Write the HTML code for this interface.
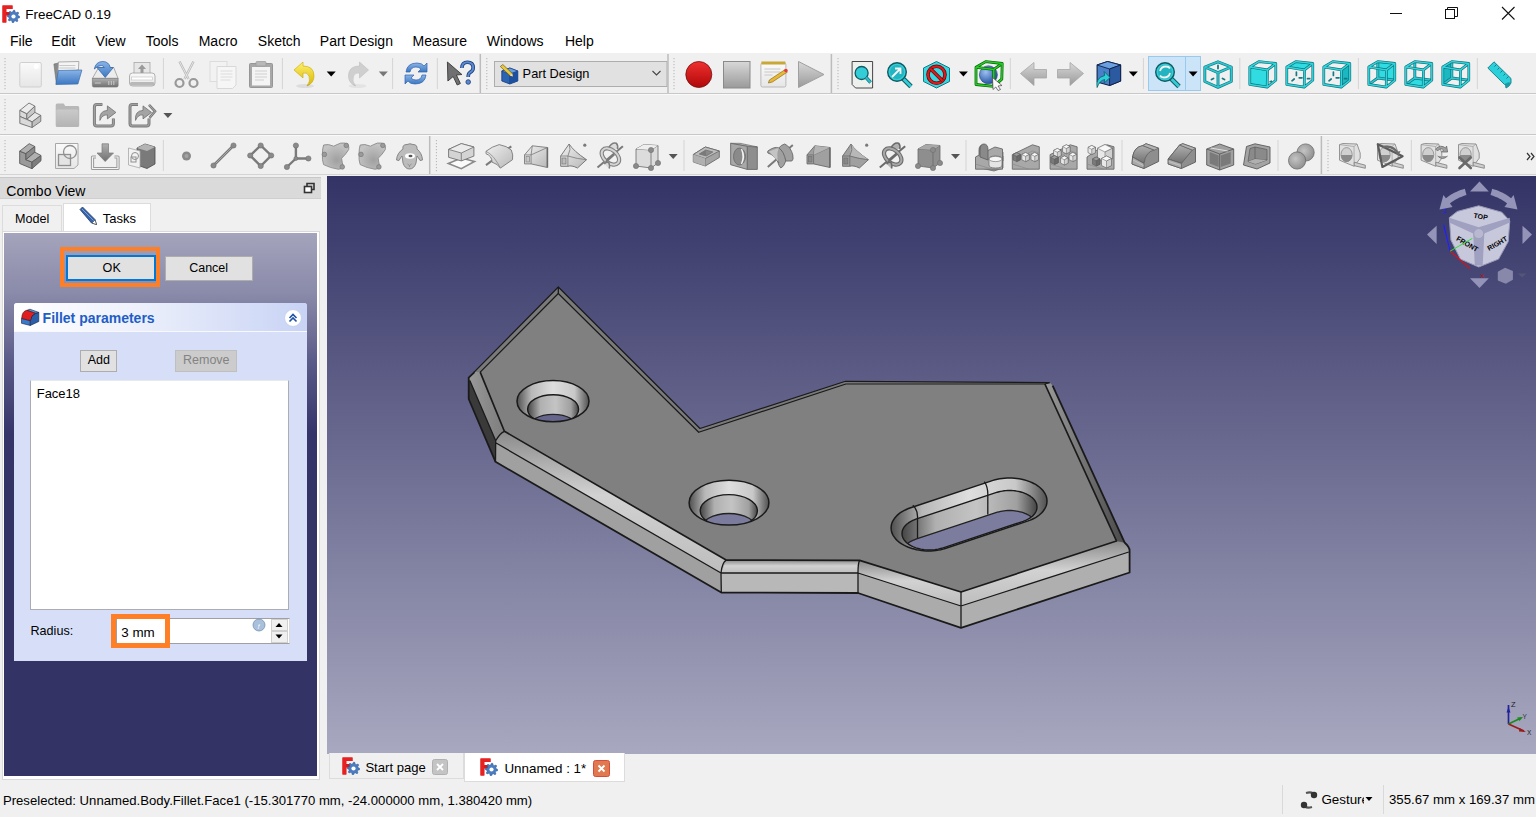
<!DOCTYPE html>
<html><head><meta charset="utf-8"><style>
html,body{margin:0;padding:0;width:1536px;height:817px;overflow:hidden;background:#f0f0f0;font-family:"Liberation Sans", sans-serif;position:relative}
</style></head><body>
<div style="position:absolute;left:0px;top:0px;width:1536px;height:53px;background:#fff"></div><div style="position:absolute;left:0px;top:53px;width:1536px;height:124px;background:#f0f0f0"></div><div style="position:absolute;left:0px;top:93px;width:1536px;height:1px;background:#c8c8c8"></div><div style="position:absolute;left:0px;top:94px;width:1536px;height:1px;background:#fafafa"></div><div style="position:absolute;left:0px;top:133.5px;width:1536px;height:1px;background:#c8c8c8"></div><div style="position:absolute;left:0px;top:134.5px;width:1536px;height:1px;background:#fafafa"></div><div style="position:absolute;left:0px;top:174px;width:1536px;height:1px;background:#d4d4d4"></div><div style="position:absolute;left:25.3px;top:7.66px;font-size:13.4px;line-height:13.4px;color:#000;font-weight:normal;white-space:nowrap;">FreeCAD 0.19</div><svg style="position:absolute;left:1384px;top:0px;" width="140" height="28" viewBox="0 0 140 28">
      <line x1="6" y1="13.5" x2="18" y2="13.5" stroke="#111" stroke-width="1"/>
      <rect x="61.5" y="9.5" width="9" height="9" fill="none" stroke="#111"/>
      <path d="M63.5 9.5 V7.5 H73.5 V16.5 H70.5" fill="none" stroke="#111"/>
      <path d="M118 7 L130.5 19.5 M130.5 7 L118 19.5" stroke="#111" stroke-width="1.1"/>
    </svg><div style="position:absolute;left:10px;top:34.15px;font-size:14px;line-height:14px;color:#000;font-weight:normal;white-space:nowrap;">File</div><div style="position:absolute;left:51.3px;top:34.15px;font-size:14px;line-height:14px;color:#000;font-weight:normal;white-space:nowrap;">Edit</div><div style="position:absolute;left:95.6px;top:34.15px;font-size:14px;line-height:14px;color:#000;font-weight:normal;white-space:nowrap;">View</div><div style="position:absolute;left:145.8px;top:34.15px;font-size:14px;line-height:14px;color:#000;font-weight:normal;white-space:nowrap;">Tools</div><div style="position:absolute;left:198.7px;top:34.15px;font-size:14px;line-height:14px;color:#000;font-weight:normal;white-space:nowrap;">Macro</div><div style="position:absolute;left:257.8px;top:34.15px;font-size:14px;line-height:14px;color:#000;font-weight:normal;white-space:nowrap;">Sketch</div><div style="position:absolute;left:319.8px;top:34.15px;font-size:14px;line-height:14px;color:#000;font-weight:normal;white-space:nowrap;">Part Design</div><div style="position:absolute;left:412.6px;top:34.15px;font-size:14px;line-height:14px;color:#000;font-weight:normal;white-space:nowrap;">Measure</div><div style="position:absolute;left:486.8px;top:34.15px;font-size:14px;line-height:14px;color:#000;font-weight:normal;white-space:nowrap;">Windows</div><div style="position:absolute;left:564.9px;top:34.15px;font-size:14px;line-height:14px;color:#000;font-weight:normal;white-space:nowrap;">Help</div><div style="position:absolute;left:0px;top:177px;width:321px;height:22px;background:#dadada;border-top:1px solid #c8c8c8;border-bottom:1px solid #cfcfcf;box-sizing:border-box"></div><div style="position:absolute;left:6.3px;top:183.65px;font-size:14px;line-height:14px;color:#000;font-weight:normal;white-space:nowrap;">Combo View</div><svg style="position:absolute;left:303px;top:182px;" width="13" height="13" viewBox="0 0 13 13"><rect x="1.5" y="4.5" width="7" height="6" fill="#fff" stroke="#333" stroke-width="1.6"/><path d="M4 4 V1.5 H11 V7.5 H9" fill="none" stroke="#333" stroke-width="1.6"/></svg><div style="position:absolute;left:2px;top:205px;width:60px;height:27px;background:#f0f0f0;border:1px solid #dcdcdc;border-bottom:none;box-sizing:border-box"></div><div style="position:absolute;left:14.9px;top:212.73px;font-size:12.6px;line-height:12.6px;color:#000;font-weight:normal;white-space:nowrap;">Model</div><div style="position:absolute;left:62.5px;top:203px;width:88px;height:29px;background:#fff;border:1px solid #dcdcdc;border-bottom:none;box-sizing:border-box"></div><div style="position:absolute;left:102.7px;top:212.40px;font-size:13px;line-height:13px;color:#000;font-weight:normal;white-space:nowrap;">Tasks</div><div style="position:absolute;left:2px;top:231px;width:318px;height:549px;background:#fff;border:1px solid #d9d9d9;box-sizing:border-box"></div><div style="position:absolute;left:4px;top:233px;width:313px;height:543px;background:linear-gradient(to bottom, #a4a4bc 0px, #8a8aaa 60px, #5a5a88 130px, #35356a 200px, #333366 260px, #333366 100%)"></div><div style="position:absolute;left:60px;top:247px;width:100px;height:40px;border:4px solid #ff7f27;box-sizing:border-box"></div><div style="position:absolute;left:66px;top:254.5px;width:89.5px;height:26.5px;background:#e1e1e1;border:2px solid #0078d7;box-sizing:border-box"></div><div style="position:absolute;left:102.6px;top:262.33px;font-size:12.6px;line-height:12.6px;color:#000;font-weight:normal;white-space:nowrap;">OK</div><div style="position:absolute;left:164.5px;top:256px;width:88.5px;height:25px;background:#e1e1e1;border:1px solid #adadad;box-sizing:border-box"></div><div style="position:absolute;left:189.2px;top:262.42px;font-size:12.5px;line-height:12.5px;color:#000;font-weight:normal;white-space:nowrap;">Cancel</div><div style="position:absolute;left:13.5px;top:303px;width:293px;height:358px;background:#d6dff7;border-radius:3px 3px 0 0"></div><div style="position:absolute;left:13.5px;top:303px;width:293px;height:29px;background:linear-gradient(to right,#ffffff 0%,#eef1fb 40%,#c8d3f5 100%);border-radius:3px 3px 0 0"></div><div style="position:absolute;left:13.5px;top:331px;width:293px;height:1px;background:#f8f9fe"></div><div style="position:absolute;left:42.6px;top:310.75px;font-size:14px;line-height:14px;color:#215dc6;font-weight:bold;white-space:nowrap;">Fillet parameters</div><div style="position:absolute;left:80px;top:349.5px;width:37px;height:22px;background:#e1e1e1;border:1px solid #adadad;box-sizing:border-box"></div><div style="position:absolute;left:87.7px;top:354.42px;font-size:12.5px;line-height:12.5px;color:#000;font-weight:normal;white-space:nowrap;">Add</div><div style="position:absolute;left:175px;top:349.5px;width:62px;height:22px;background:#cccccc;border:1px solid #bfbfbf;box-sizing:border-box"></div><div style="position:absolute;left:183px;top:354.42px;font-size:12.5px;line-height:12.5px;color:#838383;font-weight:normal;white-space:nowrap;">Remove</div><div style="position:absolute;left:30px;top:380px;width:259px;height:229.5px;background:#fff;border:1px solid #abadb3;border-top-color:#e3e9ef;box-sizing:border-box"></div><div style="position:absolute;left:36.7px;top:387.00px;font-size:13px;line-height:13px;color:#000;font-weight:normal;white-space:nowrap;">Face18</div><div style="position:absolute;left:30.5px;top:625.33px;font-size:12.6px;line-height:12.6px;color:#000;font-weight:normal;white-space:nowrap;">Radius:</div><div style="position:absolute;left:116px;top:618px;width:174px;height:25.5px;background:#fff;border:1px solid #a0a0a0;border-right-color:#dadada;box-sizing:border-box"></div><div style="position:absolute;left:270.5px;top:619px;width:17px;height:11.5px;background:#f0f0f0;border:1px solid #d0d0d0;box-sizing:border-box"></div><div style="position:absolute;left:270.5px;top:631px;width:17px;height:11.5px;background:#f0f0f0;border:1px solid #d0d0d0;box-sizing:border-box"></div><svg style="position:absolute;left:270px;top:618px;" width="18" height="26" viewBox="0 0 18 26"><path d="M5.5 9 L9 5 L12.5 9Z M5.5 16.5 L9 20.5 L12.5 16.5Z" fill="#000"/></svg><div style="position:absolute;left:111px;top:613.5px;width:59px;height:34.5px;border:5px solid #ff7f27;box-sizing:border-box"></div><div style="position:absolute;left:121.3px;top:625.66px;font-size:13.4px;line-height:13.4px;color:#000;font-weight:normal;white-space:nowrap;">3 mm</div><div style="position:absolute;left:327px;top:176px;width:1209px;height:577.5px;background:linear-gradient(to bottom,#333366 0%,#a8a8c0 100%)"></div><div style="position:absolute;left:329px;top:753px;width:135px;height:25.5px;background:#f0f0f0;border:1px solid #dcdcdc;border-top:none;box-sizing:border-box"></div><div style="position:absolute;left:365.4px;top:760.61px;font-size:13.1px;line-height:13.1px;color:#000;font-weight:normal;white-space:nowrap;">Start page</div><div style="position:absolute;left:464px;top:753px;width:161px;height:28.5px;background:#fff;border:1px solid #dcdcdc;border-top:none;box-sizing:border-box"></div><div style="position:absolute;left:504.4px;top:761.76px;font-size:13.4px;line-height:13.4px;color:#000;font-weight:normal;white-space:nowrap;">Unnamed : 1*</div><div style="position:absolute;left:2.9px;top:793.57px;font-size:13.15px;line-height:13.15px;color:#000;font-weight:normal;white-space:nowrap;">Preselected: Unnamed.Body.Fillet.Face1 (-15.301770 mm, -24.000000 mm, 1.380420 mm)</div><div style="position:absolute;left:1282px;top:784.5px;width:1px;height:29px;background:#d9d9d9"></div><div style="position:absolute;left:1383px;top:784.5px;width:1px;height:29px;background:#d9d9d9"></div><div style="position:absolute;left:1321.4px;top:788px;width:42.5px;height:24px;overflow:hidden"><div style="position:absolute;left:0px;top:5.16px;font-size:13.4px;line-height:13.4px;color:#000;font-weight:normal;white-space:nowrap;">Gesture</div></div><svg style="position:absolute;left:1364px;top:795px;" width="10" height="8" viewBox="0 0 10 8"><path d="M1.5 2 L8.5 2 L5 6Z" fill="#000"/></svg><div style="position:absolute;left:1389px;top:793.33px;font-size:13.2px;line-height:13.2px;color:#000;font-weight:normal;white-space:nowrap;">355.67 mm x 169.37 mm</div><svg style="position:absolute;left:0px;top:0px;" width="1536" height="180" viewBox="0 0 1536 180"><defs>
<linearGradient id="gW" x1="0" y1="0" x2="0" y2="1"><stop offset="0" stop-color="#fafafa"/><stop offset="1" stop-color="#e6e6e6"/></linearGradient>
<linearGradient id="gBlue" x1="0" y1="0" x2="0" y2="1"><stop offset="0" stop-color="#8ab4e6"/><stop offset="1" stop-color="#3c78c3"/></linearGradient>
<linearGradient id="gGray" x1="0" y1="0" x2="0" y2="1"><stop offset="0" stop-color="#d8d8d8"/><stop offset="1" stop-color="#9a9a9a"/></linearGradient>
<linearGradient id="gGrayD" x1="0" y1="0" x2="0" y2="1"><stop offset="0" stop-color="#b0b0b0"/><stop offset="1" stop-color="#707070"/></linearGradient>
<linearGradient id="gRed" x1="0" y1="0" x2="0" y2="1"><stop offset="0" stop-color="#f03030"/><stop offset="1" stop-color="#b00808"/></linearGradient>
<linearGradient id="gCy" x1="0" y1="0" x2="0" y2="1"><stop offset="0" stop-color="#45e0e8"/><stop offset="1" stop-color="#1bb8c4"/></linearGradient>
<linearGradient id="gYel" x1="0" y1="0" x2="0" y2="1"><stop offset="0" stop-color="#fff070"/><stop offset="1" stop-color="#d8b800"/></linearGradient>
<radialGradient id="gSph" cx="0.35" cy="0.35" r="0.7"><stop offset="0" stop-color="#9ec0f0"/><stop offset="1" stop-color="#2050a0"/></radialGradient>
<linearGradient id="gFold" x1="0" y1="0" x2="0" y2="1"><stop offset="0" stop-color="#cacaca"/><stop offset="1" stop-color="#b4b4b4"/></linearGradient>
<linearGradient id="gRev" x1="0" y1="0" x2="1" y2="1"><stop offset="0" stop-color="#f0f0f0"/><stop offset="1" stop-color="#b8b8b8"/></linearGradient>
<radialGradient id="gBlob" cx="0.55" cy="0.65" r="0.6"><stop offset="0" stop-color="#a0a0a0"/><stop offset="1" stop-color="#c4c4c4"/></radialGradient>
<radialGradient id="gSphG" cx="0.4" cy="0.4" r="0.7"><stop offset="0" stop-color="#c4c4c4"/><stop offset="1" stop-color="#8a8a8a"/></radialGradient>
</defs><rect x="4.5" y="58.0" width="1" height="1.2" fill="#b4b4b4"/><rect x="4.5" y="61.0" width="1" height="1.2" fill="#b4b4b4"/><rect x="4.5" y="64.0" width="1" height="1.2" fill="#b4b4b4"/><rect x="4.5" y="67.0" width="1" height="1.2" fill="#b4b4b4"/><rect x="4.5" y="70.0" width="1" height="1.2" fill="#b4b4b4"/><rect x="4.5" y="73.0" width="1" height="1.2" fill="#b4b4b4"/><rect x="4.5" y="76.0" width="1" height="1.2" fill="#b4b4b4"/><rect x="4.5" y="79.0" width="1" height="1.2" fill="#b4b4b4"/><rect x="4.5" y="82.0" width="1" height="1.2" fill="#b4b4b4"/><rect x="4.5" y="85.0" width="1" height="1.2" fill="#b4b4b4"/><rect x="4.5" y="88.0" width="1" height="1.2" fill="#b4b4b4"/><g transform="translate(19.3,62) scale(1.0)"><rect x="0.5" y="0.5" width="21.5" height="24.5" rx="1.5" fill="url(#gW)" stroke="#cfcfcf"/><circle cx="17" cy="4.5" r="2.5" fill="#fff"/></g><g transform="translate(53.4,61) scale(1.0)"><path d="M0.5 3 L5 2 L6 22 L3 23Z" fill="#8a8a8a" stroke="#6e6e6e" stroke-width="0.6"/><path d="M5 1 L25.5 0.5 L25 9 L4.5 12Z" fill="#f4f4f4" stroke="#9a9a9a" stroke-width="0.8"/><path d="M6 4.5 H22 M6 7 H22" stroke="#c8c8c8" stroke-width="1.2"/><path d="M5 9.5 L28.5 9 L24.5 23 L2.5 23.5Z" fill="url(#gBlue)" stroke="#3a6eb0" stroke-width="0.7"/></g><g transform="translate(91.8,61) scale(1.0)"><path d="M6.8 6.5 H21.9 L26.3 17.5 H0.6Z" fill="#ececec" stroke="#9a9a9a" stroke-width="0.8"/><path d="M0.6 17.3 H26.3 V24.5 Q26.3 26 24.8 26 H2.1 Q0.6 26 0.6 24.5Z" fill="url(#gGrayD)" stroke="#7a7a7a" stroke-width="0.7"/><path d="M3 22 H9 M17 20 V24 M19.5 20 V24 M22 20 V24" stroke="#d0d0d0" stroke-width="0.9"/><path d="M2.5 8 Q4 0.5 11 0.5 Q17 0.5 18.5 6.5 L21.5 6.5 L13.4 16.5 L5.2 6.5 L12.5 6.5 Q11.5 4.5 9.5 4.5 Q6 4.5 2.5 8Z" fill="url(#gBlue)" stroke="#2a5ea8" stroke-width="0.7"/></g><g transform="translate(129,62) scale(1.0)"><rect x="5" y="0.5" width="16" height="12" fill="#e6e6e6" stroke="#a8a8a8" stroke-width="0.8"/><path d="M13 2.5 L17 7 L14.5 7 L14.5 11 L11.5 11 L11.5 7 L9 7Z" fill="#9a9a9a"/><rect x="0.5" y="11" width="25.5" height="13" rx="3" fill="url(#gW)" stroke="#a0a0a0" stroke-width="0.8"/><rect x="2.5" y="15" width="21" height="3" fill="#fff" stroke="#c0c0c0" stroke-width="0.6"/><rect x="1" y="20" width="24.5" height="3.5" rx="1.5" fill="#b8b8b8"/></g><rect x="162.9" y="58" width="1" height="31" fill="#d4d4d4"/><g transform="translate(174.5,61) scale(1.0)"><path d="M5 0.5 L14 18 M19 0.5 L10 18" stroke="#b8b8b8" stroke-width="2.4"/><path d="M5 0.5 L14 18 M19 0.5 L10 18" stroke="#eaeaea" stroke-width="0.9"/><circle cx="5" cy="22" r="4" fill="none" stroke="#999" stroke-width="2.2"/><circle cx="19" cy="22" r="4" fill="none" stroke="#999" stroke-width="2.2"/></g><g transform="translate(209.5,61) scale(1.0)"><rect x="0.5" y="0.5" width="17" height="20" fill="#f2f2f2" stroke="#dcdcdc"/><path d="M7.5 5.5 H26.5 V24 L23 27.5 H7.5Z" fill="#f6f6f6" stroke="#d8d8d8"/><path d="M11 10 H23 M11 13 H23 M11 16 H23 M11 19 H21" stroke="#dcdcdc" stroke-width="1"/></g><g transform="translate(249,61) scale(1.0)"><rect x="0.5" y="2.5" width="23" height="24" rx="1" fill="#a8a8a8" stroke="#969696"/><rect x="3" y="6" width="18" height="18.5" fill="#f4f4f4"/><rect x="7" y="0.5" width="10" height="4.5" rx="1" fill="#b8b8b8" stroke="#9a9a9a" stroke-width="0.7"/><path d="M6 10 H18 M6 13 H18 M6 16 H18 M6 19 H15" stroke="#d0d0d0"/></g><rect x="281.9" y="58" width="1" height="31" fill="#d4d4d4"/><g transform="translate(294,61) scale(1.0)"><path d="M0 9 L9 1 L9 5 Q20 5 20 15 Q20 22 13 25 Q17 20 15 15 Q13 11 9 12 L9 17Z" fill="url(#gYel)" stroke="#c8a800" stroke-width="0.6"/><ellipse cx="11" cy="25" rx="9" ry="2" fill="#000" opacity="0.08"/></g><path d="M326.7 71.5 L335.7 71.5 L331.2 76.5Z" fill="#000"/><g transform="translate(347.5,61) scale(1.0)"><path d="M21 9 L12 1 L12 5 Q1 5 1 15 Q1 22 8 25 Q4 20 6 15 Q8 11 12 12 L12 17Z" fill="#cfcfcf" stroke="#bdbdbd" stroke-width="0.6"/><ellipse cx="10" cy="25" rx="9" ry="2" fill="#000" opacity="0.05"/></g><path d="M378.8 71.5 L387.8 71.5 L383.3 76.5Z" fill="#777"/><rect x="392.1" y="58" width="1" height="31" fill="#d4d4d4"/><g transform="translate(404,61) scale(1.0)"><path d="M2 11 Q3 2 13 2 Q18 2 20 5 L23 2 L23 11 L14 11 L17 8 Q15 6 12 6 Q7 6 6 11Z" fill="url(#gBlue)" stroke="#2c62b0" stroke-width="0.7"/><path d="M22 14 Q21 23 11 23 Q6 23 4 20 L1 23 L1 14 L10 14 L7 17 Q9 19 12 19 Q17 19 18 14Z" fill="url(#gBlue)" stroke="#2c62b0" stroke-width="0.7"/></g><rect x="436.8" y="58" width="1" height="31" fill="#d4d4d4"/><g transform="translate(446.4,61) scale(1.0)"><path d="M1 1 L15.5 13.5 L10 14 L14 22.5 L10.8 24 L6.8 15.5 L1.5 20Z" fill="#707070" stroke="#3a3a3a" stroke-width="0.9"/><path d="M15.5 7 Q15.5 1.2 21 1.2 Q26.8 1.2 26.8 6.8 Q26.8 10 23.5 11.5 Q21.8 12.5 21.8 16" fill="none" stroke="#1c3c78" stroke-width="3.6"/><path d="M15.5 7 Q15.5 1.2 21 1.2 Q26.8 1.2 26.8 6.8 Q26.8 10 23.5 11.5 Q21.8 12.5 21.8 16" fill="none" stroke="#5a8ad0" stroke-width="2"/><circle cx="21.8" cy="21" r="2.3" fill="#5a8ad0" stroke="#1c3c78" stroke-width="0.8"/></g><rect x="479.55" y="54" width="1.5" height="39" fill="#bcbcbc"/><rect x="486.3" y="58.0" width="1" height="1.2" fill="#b4b4b4"/><rect x="486.3" y="61.0" width="1" height="1.2" fill="#b4b4b4"/><rect x="486.3" y="64.0" width="1" height="1.2" fill="#b4b4b4"/><rect x="486.3" y="67.0" width="1" height="1.2" fill="#b4b4b4"/><rect x="486.3" y="70.0" width="1" height="1.2" fill="#b4b4b4"/><rect x="486.3" y="73.0" width="1" height="1.2" fill="#b4b4b4"/><rect x="486.3" y="76.0" width="1" height="1.2" fill="#b4b4b4"/><rect x="486.3" y="79.0" width="1" height="1.2" fill="#b4b4b4"/><rect x="486.3" y="82.0" width="1" height="1.2" fill="#b4b4b4"/><rect x="486.3" y="85.0" width="1" height="1.2" fill="#b4b4b4"/><rect x="486.3" y="88.0" width="1" height="1.2" fill="#b4b4b4"/><rect x="494.5" y="61.5" width="172.5" height="25" fill="#e1e1e1" stroke="#adadad"/><g transform="translate(499.8,64) scale(1.0)"><path d="M2 7 L10 4 L18 7 L18 17 L10 20 L2 17Z" fill="#2c64b4" stroke="#163a78" stroke-width="0.8"/><path d="M2 7 L10 4 L18 7 L10 10Z" fill="#6a9ee0" stroke="#163a78" stroke-width="0.6"/><path d="M10 10 V20" stroke="#163a78" stroke-width="0.7"/><path d="M10 10 L18 7 L18 17 L10 20Z" fill="#1e50a0"/><path d="M0.5 2.5 L3 0.5 L12.5 9.5 L13 12.5 L10 11.5Z" fill="#e8c838" stroke="#5a4a10" stroke-width="0.6"/><path d="M10 11.5 L13 12.5 L12.5 9.5Z" fill="#f0e0c0"/></g><path d="M652.5 71 L656.5 75 L660.5 71" fill="none" stroke="#444" stroke-width="1.1"/><rect x="667.25" y="54" width="1.5" height="39" fill="#bcbcbc"/><rect x="673.5" y="58.0" width="1" height="1.2" fill="#b4b4b4"/><rect x="673.5" y="61.0" width="1" height="1.2" fill="#b4b4b4"/><rect x="673.5" y="64.0" width="1" height="1.2" fill="#b4b4b4"/><rect x="673.5" y="67.0" width="1" height="1.2" fill="#b4b4b4"/><rect x="673.5" y="70.0" width="1" height="1.2" fill="#b4b4b4"/><rect x="673.5" y="73.0" width="1" height="1.2" fill="#b4b4b4"/><rect x="673.5" y="76.0" width="1" height="1.2" fill="#b4b4b4"/><rect x="673.5" y="79.0" width="1" height="1.2" fill="#b4b4b4"/><rect x="673.5" y="82.0" width="1" height="1.2" fill="#b4b4b4"/><rect x="673.5" y="85.0" width="1" height="1.2" fill="#b4b4b4"/><rect x="673.5" y="88.0" width="1" height="1.2" fill="#b4b4b4"/><g transform="translate(685,61) scale(1.0)"><circle cx="13.8" cy="13.5" r="13" fill="url(#gRed)" stroke="#701010" stroke-width="0.8"/></g><g transform="translate(723,61) scale(1.0)"><rect x="0.5" y="0.5" width="26.5" height="26.5" fill="url(#gGray)" stroke="#8a8a8a"/></g><g transform="translate(760.4,61) scale(1.0)"><rect x="0.5" y="2" width="25" height="24" rx="1.5" fill="url(#gW)" stroke="#b8b8b8"/><rect x="1" y="0.5" width="24" height="3" fill="#c8a838"/><path d="M4 8 H20 M4 11 H20 M4 14 H12" stroke="#c8c8c8"/><path d="M9 19 L24 9 L27 11 L12 21 L8 22Z" fill="#e8b838" stroke="#806000" stroke-width="0.6"/><circle cx="25.5" cy="9.5" r="1.8" fill="#e83838"/></g><g transform="translate(797.5,61) scale(1.0)"><path d="M1 0.5 L26.5 13.5 L1 26.5Z" fill="url(#gGray)" stroke="#a0a0a0"/></g><rect x="830.65" y="54" width="1.5" height="39" fill="#bcbcbc"/><rect x="837.5" y="58.0" width="1" height="1.2" fill="#b4b4b4"/><rect x="837.5" y="61.0" width="1" height="1.2" fill="#b4b4b4"/><rect x="837.5" y="64.0" width="1" height="1.2" fill="#b4b4b4"/><rect x="837.5" y="67.0" width="1" height="1.2" fill="#b4b4b4"/><rect x="837.5" y="70.0" width="1" height="1.2" fill="#b4b4b4"/><rect x="837.5" y="73.0" width="1" height="1.2" fill="#b4b4b4"/><rect x="837.5" y="76.0" width="1" height="1.2" fill="#b4b4b4"/><rect x="837.5" y="79.0" width="1" height="1.2" fill="#b4b4b4"/><rect x="837.5" y="82.0" width="1" height="1.2" fill="#b4b4b4"/><rect x="837.5" y="85.0" width="1" height="1.2" fill="#b4b4b4"/><rect x="837.5" y="88.0" width="1" height="1.2" fill="#b4b4b4"/><g transform="translate(851.6,61) scale(1.0)"><path d="M0.5 0.5 H21 V27 H4 L0.5 23.5Z" fill="#eef0ee" stroke="#333" stroke-width="0.9"/><circle cx="10" cy="12" r="6.5" fill="#34ccd6" stroke="#0e5a62" stroke-width="1.3"/><path d="M14.5 16.5 L19 21.5" stroke="#137a84" stroke-width="3.4"/><path d="M14.5 16.5 L19 21.5" stroke="#2cbcc8" stroke-width="2"/></g><g transform="translate(886,61) scale(1.0)"><path d="M16.5 17 L25 25.5" stroke="#0e5a62" stroke-width="4.8"/><path d="M16.5 17 L25 25.5" stroke="#34ccd6" stroke-width="2.8"/><circle cx="11" cy="11" r="9.3" fill="#34ccd6" stroke="#0e5a62" stroke-width="1.4"/><circle cx="11" cy="11" r="7" fill="#22b4c0"/><path d="M6 16 L14 8 M9 7.5 H14.5 V13" fill="none" stroke="#f4f4f4" stroke-width="1.8"/></g><g transform="translate(923,61) scale(1.0)"><path d="M13.5 0.5 L26.5 7 L26.5 20.5 L13.5 27 L0.5 20.5 L0.5 7Z" fill="#38d8e2" stroke="#137a84" stroke-width="1"/><circle cx="13.5" cy="13.8" r="8.5" fill="none" stroke="#5a0a0a" stroke-width="3.6"/><circle cx="13.5" cy="13.8" r="8.5" fill="none" stroke="#e01a1a" stroke-width="2.2"/><path d="M7.5 7.8 L19.5 19.8" stroke="#5a0a0a" stroke-width="3.6"/><path d="M7.5 7.8 L19.5 19.8" stroke="#e01a1a" stroke-width="2.2"/></g><path d="M958.9 71.5 L967.9 71.5 L963.4 76.5Z" fill="#000"/><g transform="translate(975,61) scale(1.0)"><circle cx="13.4" cy="13.8" r="9" fill="url(#gSph)" stroke="#1a3a78" stroke-width="0.6"/><path d="M1 6.3 L10.7 0.6 L27.2 2.5 L26.8 18.1 L18.8 25.4 L1 23.5Z M1 6.3 L18.8 8.4 L18.8 25.4 M18.8 8.4 L27.2 2.5" fill="none" stroke="#0a5a0a" stroke-width="2.8" stroke-linejoin="round"/><path d="M1 6.3 L10.7 0.6 L27.2 2.5 L26.8 18.1 L18.8 25.4 L1 23.5Z M1 6.3 L18.8 8.4 L18.8 25.4 M18.8 8.4 L27.2 2.5" fill="none" stroke="#22d022" stroke-width="1.5" stroke-linejoin="round"/><path d="M17.5 16.5 L27 24.5 L23 25 L25.5 28.5 L23 29.5 L20.8 26 L18 28.5Z" fill="#fafafa" stroke="#444" stroke-width="0.7"/></g><rect x="1009.8" y="58" width="1" height="31" fill="#d4d4d4"/><g transform="translate(1020,62) scale(1.0)"><path d="M0.5 11.5 L14 0.5 L14 7.5 L26.5 7.5 L26.5 16 L14 16 L14 23.5Z" fill="url(#gGray)" stroke="#a6a6a6" stroke-width="0.8"/></g><g transform="translate(1057,62) scale(1.0)"><path d="M26.5 11.5 L13 0.5 L13 7.5 L0.5 7.5 L0.5 16 L13 16 L13 23.5Z" fill="url(#gGray)" stroke="#a6a6a6" stroke-width="0.8"/></g><g transform="translate(1093.6,61) scale(1.0)"><path d="M3.5 4 L14 0.5 L27 4 L27 20 L16 24.5 L3.5 21Z" fill="#4a80c8" stroke="#10204a" stroke-width="1.1" stroke-linejoin="round"/><path d="M3.5 4 L16 8 L27 4 L14 0.5Z" fill="#6aa0e0" stroke="#10204a" stroke-width="0.9"/><path d="M16 8 L27 4 L27 20 L16 24.5Z" fill="#2c5aa0" stroke="#10204a" stroke-width="0.9"/><path d="M3.5 26.5 Q1.5 17 11 14.5 L10.5 10.5 L16.5 16.5 L10.5 22 L11 18.5 Q6 19.5 3.5 26.5Z" fill="#2ad0d8" stroke="#0e5a62" stroke-width="0.8"/></g><path d="M1128.8 71.5 L1137.8 71.5 L1133.3 76.5Z" fill="#000"/><rect x="1142.9" y="58" width="1" height="31" fill="#d4d4d4"/><rect x="1148.5" y="56.5" width="52" height="34" fill="#cce4f7" stroke="#99c9ef"/><rect x="1185" y="57" width="1" height="33" fill="#99c9ef"/><g transform="translate(1154,61) scale(1.0)"><path d="M16.5 17 L25 25.5" stroke="#0e5a62" stroke-width="4.8"/><path d="M16.5 17 L25 25.5" stroke="#34ccd6" stroke-width="2.8"/><circle cx="11" cy="11" r="9.3" fill="#34ccd6" stroke="#0e5a62" stroke-width="1.4"/><circle cx="11" cy="11" r="7" fill="#22b4c0"/><path d="M6 10 Q7 5.5 12 5.5 Q15 5.5 16 7.5 M16 12 Q15 16.5 10 16.5 Q7 16.5 6 14.5" fill="none" stroke="#f0f0f0" stroke-width="1.8"/></g><path d="M1188.6 71.5 L1197.6 71.5 L1193.1 76.5Z" fill="#000"/><g transform="translate(1204,61) scale(1.0)"><path d="M0.8 6 L14 0.8 L27.3 6 L27.3 20.5 L14 26.3 L0.8 20.5Z M0.8 6 L14 11.7 L27.3 6 M14 11.7 V26.3" fill="none" stroke="#137a84" stroke-width="2.9" stroke-linejoin="round"/><path d="M0.8 6 L14 0.8 L27.3 6 L27.3 20.5 L14 26.3 L0.8 20.5Z M0.8 6 L14 11.7 L27.3 6 M14 11.7 V26.3" fill="none" stroke="#2cc8d2" stroke-width="1.5" stroke-linejoin="round"/><path d="M14 4.5 V7.5 M7.5 18.5 L9.5 17.5 M18.5 17.5 L20.5 18.5" stroke="#137a84" stroke-width="1.8" stroke-linecap="round"/></g><rect x="1239.3" y="58" width="1" height="31" fill="#d4d4d4"/><g transform="translate(1249,61) scale(1.0)"><path d="M0.8 6 L18.5 8.9 L18.2 26.1 L0.8 23.4Z" fill="#30dce2"/><path d="M20.5 21 L23 20" stroke="#137a84" stroke-width="1.4"/><path d="M0.8 6 L9.8 0.6 L26.8 2.4 L26.8 19.3 L18.2 26.1 L0.8 23.4Z M0.8 6 L18.5 8.9 L18.2 26.1 M18.5 8.9 L26.8 2.4" fill="none" stroke="#0f6a72" stroke-width="2.7" stroke-linejoin="round"/><path d="M0.8 6 L9.8 0.6 L26.8 2.4 L26.8 19.3 L18.2 26.1 L0.8 23.4Z M0.8 6 L18.5 8.9 L18.2 26.1 M18.5 8.9 L26.8 2.4" fill="none" stroke="#30d4dc" stroke-width="1.5" stroke-linejoin="round"/></g><g transform="translate(1286,61) scale(1.0)"><path d="M0.8 6 L9.8 0.6 L26.8 2.4 L18.5 8.9Z" fill="#30dce2"/><path d="M10.4 11 V14.5 M6 19.8 L8.2 18 M13.2 16.8 H16 M21.5 17.7 H23.8" stroke="#137a84" stroke-width="1.7" stroke-linecap="round"/><path d="M0.8 6 L9.8 0.6 L26.8 2.4 L26.8 19.3 L18.2 26.1 L0.8 23.4Z M0.8 6 L18.5 8.9 L18.2 26.1 M18.5 8.9 L26.8 2.4" fill="none" stroke="#0f6a72" stroke-width="2.7" stroke-linejoin="round"/><path d="M0.8 6 L9.8 0.6 L26.8 2.4 L26.8 19.3 L18.2 26.1 L0.8 23.4Z M0.8 6 L18.5 8.9 L18.2 26.1 M18.5 8.9 L26.8 2.4" fill="none" stroke="#30d4dc" stroke-width="1.5" stroke-linejoin="round"/></g><g transform="translate(1323,61) scale(1.0)"><path d="M18.5 8.9 L26.8 2.4 L26.8 19.3 L18.2 26.1Z" fill="#1cb8c2"/><path d="M10.4 11 V14.5 M6 19.8 L8.2 18 M13.2 16.8 H16 M21.5 17.7 H23.8" stroke="#137a84" stroke-width="1.7" stroke-linecap="round"/><path d="M0.8 6 L9.8 0.6 L26.8 2.4 L26.8 19.3 L18.2 26.1 L0.8 23.4Z M0.8 6 L18.5 8.9 L18.2 26.1 M18.5 8.9 L26.8 2.4" fill="none" stroke="#0f6a72" stroke-width="2.7" stroke-linejoin="round"/><path d="M0.8 6 L9.8 0.6 L26.8 2.4 L26.8 19.3 L18.2 26.1 L0.8 23.4Z M0.8 6 L18.5 8.9 L18.2 26.1 M18.5 8.9 L26.8 2.4" fill="none" stroke="#30d4dc" stroke-width="1.5" stroke-linejoin="round"/></g><rect x="1357.9" y="58" width="1" height="31" fill="#d4d4d4"/><g transform="translate(1368,61) scale(1.0)"><path d="M9.8 0.6 L26.8 2.4 L26.8 19.3 L9.8 17Z" fill="#30dce2"/><path d="M9.8 0.6 L9.8 17 L26.8 19.3 M9.8 17 L0.8 23.4" fill="none" stroke="#137a84" stroke-width="2.9" stroke-linejoin="round"/><path d="M9.8 0.6 L9.8 17 L26.8 19.3 M9.8 17 L0.8 23.4" fill="none" stroke="#2cc8d2" stroke-width="1.5" stroke-linejoin="round"/><path d="M0.8 6 L9.8 0.6 L26.8 2.4 L26.8 19.3 L18.2 26.1 L0.8 23.4Z M0.8 6 L18.5 8.9 L18.2 26.1 M18.5 8.9 L26.8 2.4" fill="none" stroke="#0f6a72" stroke-width="2.7" stroke-linejoin="round"/><path d="M0.8 6 L9.8 0.6 L26.8 2.4 L26.8 19.3 L18.2 26.1 L0.8 23.4Z M0.8 6 L18.5 8.9 L18.2 26.1 M18.5 8.9 L26.8 2.4" fill="none" stroke="#30d4dc" stroke-width="1.5" stroke-linejoin="round"/></g><g transform="translate(1405,61) scale(1.0)"><path d="M0.8 23.4 L9.8 17 L26.8 19.3 L18.2 26.1Z" fill="#30dce2"/><path d="M9.8 0.6 L9.8 17 L26.8 19.3 M9.8 17 L0.8 23.4" fill="none" stroke="#137a84" stroke-width="2.9" stroke-linejoin="round"/><path d="M9.8 0.6 L9.8 17 L26.8 19.3 M9.8 17 L0.8 23.4" fill="none" stroke="#2cc8d2" stroke-width="1.5" stroke-linejoin="round"/><path d="M0.8 6 L9.8 0.6 L26.8 2.4 L26.8 19.3 L18.2 26.1 L0.8 23.4Z M0.8 6 L18.5 8.9 L18.2 26.1 M18.5 8.9 L26.8 2.4" fill="none" stroke="#0f6a72" stroke-width="2.7" stroke-linejoin="round"/><path d="M0.8 6 L9.8 0.6 L26.8 2.4 L26.8 19.3 L18.2 26.1 L0.8 23.4Z M0.8 6 L18.5 8.9 L18.2 26.1 M18.5 8.9 L26.8 2.4" fill="none" stroke="#30d4dc" stroke-width="1.5" stroke-linejoin="round"/></g><g transform="translate(1442,61) scale(1.0)"><path d="M0.8 6 L9.8 0.6 L9.8 17 L0.8 23.4Z" fill="#1cb8c2"/><path d="M9.8 0.6 L9.8 17 L26.8 19.3 M9.8 17 L0.8 23.4" fill="none" stroke="#137a84" stroke-width="2.9" stroke-linejoin="round"/><path d="M9.8 0.6 L9.8 17 L26.8 19.3 M9.8 17 L0.8 23.4" fill="none" stroke="#2cc8d2" stroke-width="1.5" stroke-linejoin="round"/><path d="M0.8 6 L9.8 0.6 L26.8 2.4 L26.8 19.3 L18.2 26.1 L0.8 23.4Z M0.8 6 L18.5 8.9 L18.2 26.1 M18.5 8.9 L26.8 2.4" fill="none" stroke="#0f6a72" stroke-width="2.7" stroke-linejoin="round"/><path d="M0.8 6 L9.8 0.6 L26.8 2.4 L26.8 19.3 L18.2 26.1 L0.8 23.4Z M0.8 6 L18.5 8.9 L18.2 26.1 M18.5 8.9 L26.8 2.4" fill="none" stroke="#30d4dc" stroke-width="1.5" stroke-linejoin="round"/></g><rect x="1476.8" y="58" width="1" height="31" fill="#d4d4d4"/><g transform="translate(1487,61) scale(1.0)"><path d="M0.8 7 L7 0.8 L24 17.5 L24 22 Q22 26 19 27 L18.5 23 L17.5 23.5Z" fill="#2cd0da" stroke="#137a84" stroke-width="0.9"/><path d="M7.5 5.5 L9.5 3.5 M10.5 8.5 L12 7 M13.5 11.5 L15.5 9.5 M16.5 14.5 L18 13 M19.5 17.5 L21.5 15.5" stroke="#137a84" stroke-width="1"/><path d="M18.5 23 Q21 20 24 22 Q22 26 19 27Z" fill="#1a9aa4"/></g><rect x="4.5" y="99.0" width="1" height="1.2" fill="#b4b4b4"/><rect x="4.5" y="102.0" width="1" height="1.2" fill="#b4b4b4"/><rect x="4.5" y="105.0" width="1" height="1.2" fill="#b4b4b4"/><rect x="4.5" y="108.0" width="1" height="1.2" fill="#b4b4b4"/><rect x="4.5" y="111.0" width="1" height="1.2" fill="#b4b4b4"/><rect x="4.5" y="114.0" width="1" height="1.2" fill="#b4b4b4"/><rect x="4.5" y="117.0" width="1" height="1.2" fill="#b4b4b4"/><rect x="4.5" y="120.0" width="1" height="1.2" fill="#b4b4b4"/><rect x="4.5" y="123.0" width="1" height="1.2" fill="#b4b4b4"/><rect x="4.5" y="126.0" width="1" height="1.2" fill="#b4b4b4"/><rect x="4.5" y="129.0" width="1" height="1.2" fill="#b4b4b4"/><g transform="translate(19,102.4) scale(1.0)"><g stroke="#707070" stroke-width="0.9" stroke-linejoin="round"><path d="M0.8 8 L10 0.6 L15.9 3.7 L7.8 11.5Z" fill="#ececec"/><path d="M0.8 8 L7.8 11.5 L7.8 17 L0.8 14Z" fill="#dadada"/><path d="M7.8 11.5 L15.9 3.7 L15.9 10 L7.8 17Z" fill="#c8c8c8"/><path d="M7.8 17 L15.9 10 L21.8 13 L13.2 19.5Z" fill="#e6e6e6"/><path d="M0.8 14 L7.8 17 L13.2 19.5 L13.2 25.1 L0.8 21Z" fill="#d4d4d4"/><path d="M13.2 19.5 L21.8 13 L21.8 19 L13.2 25.1Z" fill="#c0c0c0"/></g><path d="M2 17 L12 21.5 M2 19 L12 23.5" stroke="#e8e8e8" stroke-width="0.6"/></g><g transform="translate(54.7,102.4) scale(1.0)"><path d="M1 2.5 Q1 1 2.5 1 H9 L10.5 3.5 H23 Q24.5 3.5 24.5 5 V23 Q24.5 24.5 23 24.5 H2.5 Q1 24.5 1 23Z" fill="#b8b8b8"/><path d="M2.5 7 H22 Q23.5 7 23.5 8.5 V22.5 Q23.5 24 22 24 H3 Q1.5 24 1.5 22.5 V8.5 Q1.5 7 2.5 7Z" fill="url(#gFold)"/></g><g transform="translate(92.4,102.4) scale(1.0)"><path d="M10 2 H4.5 Q2 2 2 4.5 V21 Q2 23.5 4.5 23.5 H18.5 Q21 23.5 21 21 V16" fill="none" stroke="#7a7a7a" stroke-width="3"/><path d="M10 2 H4.5 Q2 2 2 4.5 V21 Q2 23.5 4.5 23.5 H18.5 Q21 23.5 21 21 V16" fill="none" stroke="#a0a0a0" stroke-width="1.2"/><path d="M7.5 18 Q6.5 8.5 15 8 L15 3.5 L23.5 10 L15 16.5 L15 12.5 Q10 12 7.5 18Z" fill="#a4a4a4" stroke="#6e6e6e" stroke-width="0.8"/></g><g transform="translate(128,102.4) scale(1.0)"><path d="M10 2 H4.5 Q2 2 2 4.5 V21 Q2 23.5 4.5 23.5 H18.5 Q21 23.5 21 21 V16" fill="none" stroke="#7a7a7a" stroke-width="3"/><path d="M10 2 H4.5 Q2 2 2 4.5 V21 Q2 23.5 4.5 23.5 H18.5 Q21 23.5 21 21 V16" fill="none" stroke="#a0a0a0" stroke-width="1.2"/><path d="M7.5 18 Q6.5 8.5 15 8 L15 3.5 L23.5 10 L15 16.5 L15 12.5 Q10 12 7.5 18Z" fill="#a4a4a4" stroke="#6e6e6e" stroke-width="0.8"/><path d="M21 2.5 L27 9 L21.5 15.5" fill="none" stroke="#7a7a7a" stroke-width="2.6"/><path d="M21 2.5 L27 9 L21.5 15.5" fill="none" stroke="#a8a8a8" stroke-width="1"/></g><path d="M163.4 113 L172.4 113 L167.9 118Z" fill="#555"/><rect x="4.5" y="140.0" width="1" height="1.2" fill="#b4b4b4"/><rect x="4.5" y="143.0" width="1" height="1.2" fill="#b4b4b4"/><rect x="4.5" y="146.0" width="1" height="1.2" fill="#b4b4b4"/><rect x="4.5" y="149.0" width="1" height="1.2" fill="#b4b4b4"/><rect x="4.5" y="152.0" width="1" height="1.2" fill="#b4b4b4"/><rect x="4.5" y="155.0" width="1" height="1.2" fill="#b4b4b4"/><rect x="4.5" y="158.0" width="1" height="1.2" fill="#b4b4b4"/><rect x="4.5" y="161.0" width="1" height="1.2" fill="#b4b4b4"/><rect x="4.5" y="164.0" width="1" height="1.2" fill="#b4b4b4"/><rect x="4.5" y="167.0" width="1" height="1.2" fill="#b4b4b4"/><rect x="4.5" y="170.0" width="1" height="1.2" fill="#b4b4b4"/><g transform="translate(19.3,143) scale(1.0)"><g stroke="#5a5a5a" stroke-width="0.9" stroke-linejoin="round"><path d="M0.4 8.2 L6.6 10.6 L6.6 16.7 L12.7 19.1 L12.7 25.7 L0.4 20.5Z" fill="#9a9a9a"/><path d="M0.4 8.2 L9.9 0.7 L15.5 3.5 L6.6 10.6Z" fill="#b0b0b0"/><path d="M6.6 10.6 L15.5 3.5 L15.5 9.2 L6.6 16.7Z" fill="#8a8a8a"/><path d="M6.6 16.7 L15.5 9.2 L21.7 12.5 L12.7 19.1Z" fill="#b0b0b0"/><path d="M12.7 19.1 L21.7 12.5 L21.7 17.7 L12.7 25.7Z" fill="#7e7e7e"/></g></g><g transform="translate(55,143) scale(1.0)"><path d="M0.5 0.5 H23 V22 L19 25.5 H0.5Z" fill="url(#gW)" stroke="#a8a8a8"/><rect x="3.5" y="11.5" width="12" height="11" fill="#e4e4e4" stroke="#909090" stroke-width="1.3"/><circle cx="15" cy="9" r="6.5" fill="none" stroke="#909090" stroke-width="1.3"/></g><g transform="translate(91,143) scale(1.0)"><path d="M5 14 H1.5 V25.5 H27 V14 H23.5" fill="none" stroke="#9a9a9a" stroke-width="3.2" stroke-linejoin="round"/><path d="M5 14 H1.5 V25.5 H27 V14 H23.5" fill="none" stroke="#f4f4f4" stroke-width="1.2" stroke-linejoin="round"/><path d="M11 0.8 H17.5 V10 H22.5 L14.2 18.5 L6 10 H11Z" fill="url(#gGrayD)" stroke="#7a7a7a" stroke-width="0.7"/></g><g transform="translate(128,143) scale(1.0)"><path d="M9 5 L17 1 L27 4 L27 21 L19 25.5 L9 22Z" fill="#7a7a7a" stroke="#4a4a4a" stroke-width="0.8"/><path d="M9 5 L19 8 L27 4 L17 1Z" fill="#b4b4b4"/><path d="M0.5 5 L12 8 L12 25 L0.5 22Z" fill="#f2f2f2" stroke="#a8a8a8" stroke-width="0.8"/><circle cx="7" cy="13" r="3.5" fill="none" stroke="#909090"/><rect x="3" y="14" width="5" height="5" fill="none" stroke="#909090"/></g><rect x="162.8" y="140" width="1" height="31" fill="#d4d4d4"/><g transform="translate(182,151.5) scale(1.0)"><circle cx="4.5" cy="4.5" r="4.5" fill="#8a8a8a"/><circle cx="4.5" cy="4.5" r="2" fill="#a4a4a4"/></g><g transform="translate(210,143) scale(1.0)"><path d="M3.5 22.5 L23.5 2.5" stroke="#7a7a7a" stroke-width="2.6"/><path d="M3.5 22.5 L23.5 2.5" stroke="#a8a8a8" stroke-width="1"/><circle cx="3.5" cy="22.5" r="2.6" fill="#8a8a8a" stroke="#6e6e6e" stroke-width="0.6"/><circle cx="23.5" cy="2.5" r="2.6" fill="#8a8a8a" stroke="#6e6e6e" stroke-width="0.6"/></g><g transform="translate(247.7,143) scale(1.0)"><path d="M2.5 12.5 L13 2.5 L23.5 12.5 L13 23Z" fill="none" stroke="#7a7a7a" stroke-width="2.4"/><circle cx="2.5" cy="12.5" r="2.6" fill="#8a8a8a" stroke="#6e6e6e" stroke-width="0.6"/><circle cx="13" cy="2.5" r="2.6" fill="#8a8a8a" stroke="#6e6e6e" stroke-width="0.6"/><circle cx="23.5" cy="12.5" r="2.6" fill="#8a8a8a" stroke="#6e6e6e" stroke-width="0.6"/><circle cx="13" cy="23" r="2.6" fill="#8a8a8a" stroke="#6e6e6e" stroke-width="0.6"/></g><g transform="translate(284.4,143) scale(1.0)"><path d="M11.5 2.5 V15.5 H24 M11.5 15.5 L2.5 24" fill="none" stroke="#7a7a7a" stroke-width="2.4"/><circle cx="11.5" cy="2.5" r="2.6" fill="#8a8a8a" stroke="#6e6e6e" stroke-width="0.6"/><circle cx="24" cy="15.5" r="2.6" fill="#8a8a8a" stroke="#6e6e6e" stroke-width="0.6"/><circle cx="2.5" cy="24" r="2.6" fill="#8a8a8a" stroke="#6e6e6e" stroke-width="0.6"/><circle cx="11.5" cy="15.5" r="2" fill="#8a8a8a" stroke="#6e6e6e" stroke-width="0.6"/></g><g transform="translate(322,143) scale(1.0)"><path d="M1.6 2 Q6 0.5 11.75 3.2 Q15 1.5 18.8 0.1 Q23 -0.5 25.8 1.25 Q27.5 4 26.6 6.7 Q24 11 19.6 15.3 Q20 19 21.1 23.1 Q20 26.5 16.4 26.25 Q8 25 1.6 21.6 Q0 17 0.4 11.4 Q0.5 5 1.6 2Z" fill="url(#gBlob)" stroke="#8a8a8a" stroke-width="0.9"/><circle cx="24.25" cy="2.4" r="2.3" fill="#9a9a9a" stroke="#7a7a7a" stroke-width="0.7"/><circle cx="2.4" cy="11.4" r="2.3" fill="#9a9a9a" stroke="#7a7a7a" stroke-width="0.7"/><circle cx="20.3" cy="23.9" r="2.3" fill="#9a9a9a" stroke="#7a7a7a" stroke-width="0.7"/></g><g transform="translate(358.6,143) scale(1.0)"><path d="M1.6 2 Q6 0.5 11.75 3.2 Q15 1.5 18.8 0.1 Q23 -0.5 25.8 1.25 Q27.5 4 26.6 6.7 Q24 11 19.6 15.3 Q20 19 21.1 23.1 Q20 26.5 16.4 26.25 Q8 25 1.6 21.6 Q0 17 0.4 11.4 Q0.5 5 1.6 2Z" fill="url(#gBlob)" stroke="#8a8a8a" stroke-width="0.9"/><circle cx="24.25" cy="2.4" r="2.3" fill="#9a9a9a" stroke="#7a7a7a" stroke-width="0.7"/><circle cx="2.4" cy="11.4" r="2.3" fill="#9a9a9a" stroke="#7a7a7a" stroke-width="0.7"/><circle cx="20.3" cy="23.9" r="2.3" fill="#9a9a9a" stroke="#7a7a7a" stroke-width="0.7"/></g><g transform="translate(396,143) scale(1.0)"><path d="M7 6 Q6 1.5 11 1.5 Q14 0 17 1.5 Q21.5 1.5 21 6 Q26 10 26.5 17 L24 17.5 Q22 14 21 13 L20 20 Q18 26 13.5 26 Q9 26 7 20 L6 13 Q5 14 3 17.5 L0.5 17 Q1 10 7 6Z" fill="#bcbcbc" stroke="#7e7e7e" stroke-width="0.9"/><ellipse cx="14" cy="13" rx="5" ry="2.8" fill="#fff"/><ellipse cx="14.5" cy="13" rx="2" ry="1.2" fill="#555"/><path d="M11.5 21 L13.5 22.5 L15.5 21 M13.5 22.5 V24" fill="none" stroke="#888" stroke-width="0.8"/></g><rect x="428.95" y="136" width="1.5" height="38" fill="#bcbcbc"/><rect x="435.9" y="140.0" width="1" height="1.2" fill="#b4b4b4"/><rect x="435.9" y="143.0" width="1" height="1.2" fill="#b4b4b4"/><rect x="435.9" y="146.0" width="1" height="1.2" fill="#b4b4b4"/><rect x="435.9" y="149.0" width="1" height="1.2" fill="#b4b4b4"/><rect x="435.9" y="152.0" width="1" height="1.2" fill="#b4b4b4"/><rect x="435.9" y="155.0" width="1" height="1.2" fill="#b4b4b4"/><rect x="435.9" y="158.0" width="1" height="1.2" fill="#b4b4b4"/><rect x="435.9" y="161.0" width="1" height="1.2" fill="#b4b4b4"/><rect x="435.9" y="164.0" width="1" height="1.2" fill="#b4b4b4"/><rect x="435.9" y="167.0" width="1" height="1.2" fill="#b4b4b4"/><rect x="435.9" y="170.0" width="1" height="1.2" fill="#b4b4b4"/><g transform="translate(447.8,143) scale(1.0)"><path d="M0.5 20.5 L13.5 15 L26.7 18.5 L13.5 25.7Z" fill="#fafafa" stroke="#8a8a8a" stroke-width="1.6"/><path d="M0.8 6.4 L13.5 0.6 L26.1 4 L26.1 13.1 L13.5 17.9 L0.8 14.3Z" fill="#d4d4d4" stroke="#707070" stroke-width="0.9"/><path d="M0.8 6.4 L13.5 0.6 L26.1 4 L13.5 10Z" fill="#ececec" stroke="#707070" stroke-width="0.8"/><path d="M13.5 10 V17.9" stroke="#707070" stroke-width="0.8"/></g><g transform="translate(485,143) scale(1.0)"><path d="M1 22.1 L26.3 3.4" stroke="#7a7a7a" stroke-width="2"/><path d="M1 8.25 Q7 3.5 14.2 1.6 Q22 3 26.3 7 Q28.5 12 27.5 16.7 L15.4 25.1 Q13 21 7 19.1 Q7 13 1 10.7Z" fill="url(#gRev)" stroke="#7a7a7a" stroke-width="0.9"/><path d="M1 8.25 Q9 12 15.4 25.1" fill="none" stroke="#8a8a8a" stroke-width="0.8"/></g><g transform="translate(524,143) scale(1.0)"><path d="M0.5 11.9 L8.3 2.8 L23.4 4.5 L23.4 24.5 L7.1 20.9 L0.5 20.9Z" fill="url(#gRev)" stroke="#7a7a7a" stroke-width="0.9"/><path d="M8.3 2.8 L7.1 11.9 L0.5 11.9 M7.1 11.9 L23.4 4.5 M7.1 11.9 V20.9" fill="none" stroke="#7a7a7a" stroke-width="0.8"/><rect x="2" y="13.5" width="3.5" height="5.5" fill="#c8c8c8" stroke="#7a7a7a" stroke-width="0.6"/><path d="M23.4 4.5 V24.5" stroke="#6a6a6a" stroke-width="1.6"/></g><g transform="translate(559.5,143) scale(1.0)"><path d="M1.2 13 L9.6 1 Q14 8 27 16.7 L18 25 Q12 22 8.4 23.3 L1.2 23.3Z" fill="url(#gRev)" stroke="#6e6e6e" stroke-width="0.9"/><path d="M8.4 13 Q12 6 9.6 1 M8.4 13 L1.2 13 M8.4 13 V23.3 M8.4 13 Q18 16 27 16.7" fill="none" stroke="#7a7a7a" stroke-width="0.8"/><rect x="2.5" y="15" width="4" height="6" fill="#bbb" stroke="#6a6a6a" stroke-width="0.6"/><circle cx="25.3" cy="2.2" r="1.6" fill="#7a7a7a"/></g><g transform="translate(596.7,143) scale(1.0)"><path d="M0.8 24.6 L26.2 3.3" stroke="#7a7a7a" stroke-width="2"/><path d="M11.6 5.5 Q15 -1 19.5 0.2 Q21.5 2 20.8 6" fill="#dcdcdc" stroke="#7e7e7e" stroke-width="1.6"/><ellipse cx="13.7" cy="13.5" rx="10" ry="6.5" transform="rotate(40 13.7 13.5)" fill="none" stroke="#808080" stroke-width="4.2"/><ellipse cx="13.7" cy="13.5" rx="10" ry="6.5" transform="rotate(40 13.7 13.5)" fill="none" stroke="#d4d4d4" stroke-width="2"/><path d="M7.5 21 Q10.5 18 12.2 20 Q13.5 23 12.5 25.5" fill="#dcdcdc" stroke="#7e7e7e" stroke-width="1.6"/><path d="M9 19 L17.5 11.5" stroke="#7a7a7a" stroke-width="2"/></g><g transform="translate(634,143) scale(1.0)"><path d="M2 6 L10 1.5 L24 2.5 L24 20 L17 25 L2 23Z" fill="#dcdcdc" stroke="#6a6a6a" stroke-width="0.8"/><path d="M2 6 L17 7 L24 2.5 M17 7 V25" fill="none" stroke="#6a6a6a" stroke-width="0.8"/><path d="M2 6 L10 1.5 L24 2.5 L17 7Z" fill="#eeeeee"/><circle cx="17" cy="7" r="2.6" fill="#8a8a8a" stroke="#6e6e6e" stroke-width="0.6"/><circle cx="17" cy="25" r="2.6" fill="#8a8a8a" stroke="#6e6e6e" stroke-width="0.6"/><circle cx="2" cy="23" r="2.6" fill="#8a8a8a" stroke="#6e6e6e" stroke-width="0.6"/><circle cx="24" cy="20" r="2.6" fill="#8a8a8a" stroke="#6e6e6e" stroke-width="0.6"/></g><path d="M668.7 154 L677.7 154 L673.2 159Z" fill="#555"/><rect x="683.5" y="140" width="1" height="31" fill="#d4d4d4"/><g transform="translate(692.3,143) scale(1.0)"><path d="M1 11.5 L13 4 L27 8 L27 14.5 L13 23 L1 19Z" fill="#a4a4a4" stroke="#6a6a6a" stroke-width="0.9"/><path d="M1 11.5 L13 15.5 L27 8 L13 4Z" fill="#bcbcbc" stroke="#6a6a6a" stroke-width="0.8"/><path d="M13 15.5 V23" stroke="#6a6a6a" stroke-width="0.8"/><path d="M1 11.5 L13 15.5 L13 23 L1 19Z" fill="#b0b0b0"/><path d="M7 11 L13.5 7 L20.5 9 L14 13Z" fill="#8a8a8a" stroke="#6a6a6a" stroke-width="0.7"/><path d="M7 11 L13.5 7 L14 13Z" fill="#7a7a7a"/></g><g transform="translate(730,143) scale(1.0)"><path d="M17.2 3.3 L27.3 3.9 L27.3 26.4 L17.2 26.4Z" fill="#8e8e8e" stroke="#6a6a6a" stroke-width="0.9"/><path d="M0.65 0.3 L10 0.3 L27.3 3.9 L17.2 3.3Z" fill="#b8b8b8" stroke="#6a6a6a" stroke-width="0.7"/><path d="M0.65 0.3 L17.2 3.3 L17.2 26.4 L0.65 21.7Z" fill="#a8a8a8" stroke="#6a6a6a" stroke-width="0.9"/><ellipse cx="9.5" cy="13.5" rx="6" ry="8.5" fill="#8a8a8a" stroke="#6a6a6a" stroke-width="0.8"/><path d="M11.5 6 Q15.5 13.5 11.5 21 Q14.5 13.5 11.5 6Z" fill="#f4f4f4" stroke="#f4f4f4" stroke-width="1.2"/></g><g transform="translate(766.8,143) scale(1.0)"><path d="M1 24 L26 2" stroke="#7a7a7a" stroke-width="2"/><path d="M1 8 Q8 3 12 5 Q14 2 18 1 Q24 4 26 12 Q27 17 25 18 L19 18 Q17 24 14 25 Q12 23 11 19 Q8 12 1 10Z" fill="#a0a0a0" stroke="#6a6a6a" stroke-width="0.9"/><path d="M3 9.5 Q9 9 12 20 M12 5 Q17 8 19 18" fill="none" stroke="#6a6a6a" stroke-width="1"/><path d="M2 8.5 Q8 6 12 5 Q9 12 12 19" fill="#c4c4c4"/></g><g transform="translate(806.5,143) scale(1.0)"><path d="M0.5 11.9 L8.3 2.8 L23.4 4.5 L23.4 24.5 L7.1 20.9 L0.5 20.9Z" fill="#a0a0a0" stroke="#6a6a6a" stroke-width="0.9"/><path d="M8.3 2.8 L7.1 11.9 L0.5 11.9 M7.1 11.9 L23.4 4.5 M7.1 11.9 V20.9" fill="none" stroke="#6a6a6a" stroke-width="0.8"/><path d="M8.3 2.8 L23.4 4.5 L7.1 11.9Z" fill="#b4b4b4"/><rect x="2" y="13.5" width="3.5" height="5.5" fill="#8a8a8a" stroke="#6a6a6a" stroke-width="0.6"/><path d="M23.4 4.5 V24.5" stroke="#6a6a6a" stroke-width="1.6"/></g><g transform="translate(841.4,143) scale(1.0)"><path d="M1.2 13 L9.6 1 Q14 8 27 16.7 L18 25 Q12 22 8.4 23.3 L1.2 23.3Z" fill="#a0a0a0" stroke="#6a6a6a" stroke-width="0.9"/><path d="M9.6 1 Q14 8 27 16.7 L8.4 13Z" fill="#b8b8b8"/><path d="M8.4 13 Q12 6 9.6 1 M8.4 13 L1.2 13 M8.4 13 V23.3 M8.4 13 Q18 16 27 16.7" fill="none" stroke="#6a6a6a" stroke-width="0.8"/><rect x="2.5" y="15" width="4" height="6" fill="#888" stroke="#6a6a6a" stroke-width="0.6"/><circle cx="25.3" cy="2.2" r="1.6" fill="#7a7a7a"/></g><g transform="translate(879,143) scale(1.0)"><path d="M0.8 24.6 L26.2 3.3" stroke="#6a6a6a" stroke-width="2"/><path d="M11.6 5.5 Q15 -1 19.5 0.2 Q21.5 2 20.8 6" fill="#b0b0b0" stroke="#6a6a6a" stroke-width="1.6"/><ellipse cx="13.7" cy="13.5" rx="10" ry="6.5" transform="rotate(40 13.7 13.5)" fill="none" stroke="#6a6a6a" stroke-width="4.2"/><ellipse cx="13.7" cy="13.5" rx="10" ry="6.5" transform="rotate(40 13.7 13.5)" fill="none" stroke="#a8a8a8" stroke-width="2"/><path d="M7.5 21 Q10.5 18 12.2 20 Q13.5 23 12.5 25.5" fill="#b0b0b0" stroke="#6a6a6a" stroke-width="1.6"/><path d="M9 19 L17.5 11.5" stroke="#6a6a6a" stroke-width="2"/></g><g transform="translate(916,143) scale(1.0)"><path d="M2 6 L10 1.5 L24 2.5 L24 20 L17 25 L2 23Z" fill="#8e8e8e" stroke="#6a6a6a" stroke-width="0.8"/><path d="M2 6 L17 7 L24 2.5 M17 7 V25" fill="none" stroke="#6a6a6a" stroke-width="0.8"/><path d="M2 6 L10 1.5 L24 2.5 L17 7Z" fill="#a8a8a8"/><circle cx="17" cy="7" r="2.6" fill="#8a8a8a" stroke="#6e6e6e" stroke-width="0.6"/><circle cx="17" cy="25" r="2.6" fill="#8a8a8a" stroke="#6e6e6e" stroke-width="0.6"/><circle cx="2" cy="23" r="2.6" fill="#8a8a8a" stroke="#6e6e6e" stroke-width="0.6"/><circle cx="24" cy="20" r="2.6" fill="#8a8a8a" stroke="#6e6e6e" stroke-width="0.6"/></g><path d="M951 154 L960 154 L955.5 159Z" fill="#555"/><rect x="965.5" y="140" width="1" height="31" fill="#d4d4d4"/><g transform="translate(975,143) scale(1.0)"><path d="M1 15 L10 10 L28 13 L28 25 L19 28 L1 24Z" fill="#9a9a9a" stroke="#6a6a6a" stroke-width="0.8"/><path d="M4 7 Q4 2 8 2 Q12 2 12 7 V20 L4 17Z" fill="#8a8a8a" stroke="#5a5a5a" stroke-width="0.8"/><path d="M14 9 L21 5 L28 9 V18" fill="#a8a8a8" stroke="#6a6a6a" stroke-width="0.8"/><path d="M14 18 V22 Q19 25 24 22 V18 Q19 21 14 18Z" fill="#eee"/><ellipse cx="19" cy="18" rx="5" ry="2.5" fill="#f8f8f8" stroke="#777" stroke-width="0.6"/></g><g transform="translate(975,143) scale(1.0)"><path d="M0.5 14 L8 10 L20 4 L27.5 6 L27.5 26.2 L0.5 26.2Z" fill="#a8a8a8" stroke="#6a6a6a" stroke-width="0.9"/><path d="M0.5 21 L17 26.2" stroke="#8a8a8a" stroke-width="0.7"/><path d="M5 7 Q5 1 9 1 Q13 1 13 7 L13 17 L5 14Z" fill="#8a8a8a" stroke="#5a5a5a" stroke-width="0.8"/><path d="M14 16 Q14 13 20.5 13 Q27 13 27 16 V22 Q27 25 20.5 25 Q14 25 14 22Z" fill="#e4e4e4" stroke="#6a6a6a" stroke-width="0.7"/><ellipse cx="20.5" cy="16" rx="6.5" ry="2.6" fill="#f6f6f6" stroke="#6a6a6a" stroke-width="0.6"/></g><g transform="translate(1011.8,143) scale(1.0)"><path d="M0.5 11.6 L20.7 1.8 L27.5 3.8 L27.5 26.2 L0.5 26.2Z" fill="#a8a8a8" stroke="#6a6a6a" stroke-width="0.9"/><path d="M0.5 18 L20.7 8 L27.5 10" fill="none" stroke="#8a8a8a" stroke-width="0.6"/><path d="M0.5 21 L17 26.2" stroke="#8a8a8a" stroke-width="0.7"/><path d="M1.2 11.475 L4.95 9.6 L8.7 11.475 L8.7 16.725 L4.95 18.6 L1.2 16.725Z" fill="#7a7a7a" stroke="#5a5a5a" stroke-width="0.6"/><path d="M1.2 11.475 L4.95 9.6 L8.7 11.475 L4.95 13.35Z" fill="#9a9a9a" stroke="#5a5a5a" stroke-width="0.5"/><path d="M4.95 13.35 L8.7 11.475 L8.7 16.725 L4.95 18.6Z" fill="#6a6a6a" stroke="#5a5a5a" stroke-width="0.5"/><path d="M10 11.475 L13.75 9.6 L17.5 11.475 L17.5 16.725 L13.75 18.6 L10 16.725Z" fill="#e8e8e8" stroke="#5a5a5a" stroke-width="0.6"/><path d="M10 11.475 L13.75 9.6 L17.5 11.475 L13.75 13.35Z" fill="#f8f8f8" stroke="#5a5a5a" stroke-width="0.5"/><path d="M13.75 13.35 L17.5 11.475 L17.5 16.725 L13.75 18.6Z" fill="#cfcfcf" stroke="#5a5a5a" stroke-width="0.5"/><path d="M19.2 11.475 L22.95 9.6 L26.7 11.475 L26.7 16.725 L22.95 18.6 L19.2 16.725Z" fill="#e8e8e8" stroke="#5a5a5a" stroke-width="0.6"/><path d="M19.2 11.475 L22.95 9.6 L26.7 11.475 L22.95 13.35Z" fill="#f8f8f8" stroke="#5a5a5a" stroke-width="0.5"/><path d="M22.95 13.35 L26.7 11.475 L26.7 16.725 L22.95 18.6Z" fill="#cfcfcf" stroke="#5a5a5a" stroke-width="0.5"/></g><g transform="translate(1049.6,143) scale(1.0)"><path d="M0.5 11.6 L20.7 1.8 L27.5 3.8 L27.5 26.2 L0.5 26.2Z" fill="#a8a8a8" stroke="#6a6a6a" stroke-width="0.9"/><path d="M0.5 18 L20.7 8 L27.5 10" fill="none" stroke="#8a8a8a" stroke-width="0.6"/><path d="M0.5 21 L17 26.2" stroke="#8a8a8a" stroke-width="0.7"/><path d="M4 7.375 L7.75 5.5 L11.5 7.375 L11.5 12.625 L7.75 14.5 L4 12.625Z" fill="#e8e8e8" stroke="#5a5a5a" stroke-width="0.6"/><path d="M4 7.375 L7.75 5.5 L11.5 7.375 L7.75 9.25Z" fill="#f8f8f8" stroke="#5a5a5a" stroke-width="0.5"/><path d="M7.75 9.25 L11.5 7.375 L11.5 12.625 L7.75 14.5Z" fill="#cfcfcf" stroke="#5a5a5a" stroke-width="0.5"/><path d="M13 3.675 L16.75 1.8 L20.5 3.675 L20.5 8.925 L16.75 10.8 L13 8.925Z" fill="#e8e8e8" stroke="#5a5a5a" stroke-width="0.6"/><path d="M13 3.675 L16.75 1.8 L20.5 3.675 L16.75 5.55Z" fill="#f8f8f8" stroke="#5a5a5a" stroke-width="0.5"/><path d="M16.75 5.55 L20.5 3.675 L20.5 8.925 L16.75 10.8Z" fill="#cfcfcf" stroke="#5a5a5a" stroke-width="0.5"/><path d="M1.2 14.375 L4.95 12.5 L8.7 14.375 L8.7 19.625 L4.95 21.5 L1.2 19.625Z" fill="#7a7a7a" stroke="#5a5a5a" stroke-width="0.6"/><path d="M1.2 14.375 L4.95 12.5 L8.7 14.375 L4.95 16.25Z" fill="#9a9a9a" stroke="#5a5a5a" stroke-width="0.5"/><path d="M4.95 16.25 L8.7 14.375 L8.7 19.625 L4.95 21.5Z" fill="#6a6a6a" stroke="#5a5a5a" stroke-width="0.5"/><path d="M11 14.875 L14.75 13 L18.5 14.875 L18.5 20.125 L14.75 22.0 L11 20.125Z" fill="#e8e8e8" stroke="#5a5a5a" stroke-width="0.6"/><path d="M11 14.875 L14.75 13 L18.5 14.875 L14.75 16.75Z" fill="#f8f8f8" stroke="#5a5a5a" stroke-width="0.5"/><path d="M14.75 16.75 L18.5 14.875 L18.5 20.125 L14.75 22.0Z" fill="#cfcfcf" stroke="#5a5a5a" stroke-width="0.5"/><path d="M19.5 11.375 L23.25 9.5 L27.0 11.375 L27.0 16.625 L23.25 18.5 L19.5 16.625Z" fill="#e8e8e8" stroke="#5a5a5a" stroke-width="0.6"/><path d="M19.5 11.375 L23.25 9.5 L27.0 11.375 L23.25 13.25Z" fill="#f8f8f8" stroke="#5a5a5a" stroke-width="0.5"/><path d="M23.25 13.25 L27.0 11.375 L27.0 16.625 L23.25 18.5Z" fill="#cfcfcf" stroke="#5a5a5a" stroke-width="0.5"/></g><g transform="translate(1086.5,143) scale(1.0)"><path d="M0.5 14 L12 6 L20.7 1.8 L27.5 3.8 L27.5 26.2 L0.5 26.2Z" fill="#a8a8a8" stroke="#6a6a6a" stroke-width="0.9"/><path d="M0.5 21 L17 26.2" stroke="#8a8a8a" stroke-width="0.7"/><path d="M1.5 4.375 L5.25 2.5 L9.0 4.375 L9.0 9.625 L5.25 11.5 L1.5 9.625Z" fill="#e8e8e8" stroke="#5a5a5a" stroke-width="0.6"/><path d="M1.5 4.375 L5.25 2.5 L9.0 4.375 L5.25 6.25Z" fill="#f8f8f8" stroke="#5a5a5a" stroke-width="0.5"/><path d="M5.25 6.25 L9.0 4.375 L9.0 9.625 L5.25 11.5Z" fill="#cfcfcf" stroke="#5a5a5a" stroke-width="0.5"/><path d="M11 5.25 L18.5 1.5 L26 5.25 L26 15.75 L18.5 19.5 L11 15.75Z" fill="#e8e8e8" stroke="#5a5a5a" stroke-width="0.6"/><path d="M11 5.25 L18.5 1.5 L26 5.25 L18.5 9.0Z" fill="#f8f8f8" stroke="#5a5a5a" stroke-width="0.5"/><path d="M18.5 9.0 L26 5.25 L26 15.75 L18.5 19.5Z" fill="#cfcfcf" stroke="#5a5a5a" stroke-width="0.5"/><path d="M6 15.875 L9.75 14 L13.5 15.875 L13.5 21.125 L9.75 23.0 L6 21.125Z" fill="#7a7a7a" stroke="#5a5a5a" stroke-width="0.6"/><path d="M6 15.875 L9.75 14 L13.5 15.875 L9.75 17.75Z" fill="#9a9a9a" stroke="#5a5a5a" stroke-width="0.5"/><path d="M9.75 17.75 L13.5 15.875 L13.5 21.125 L9.75 23.0Z" fill="#6a6a6a" stroke="#5a5a5a" stroke-width="0.5"/><path d="M15 15.5 L20.0 13 L25 15.5 L25 22.5 L20.0 25.0 L15 22.5Z" fill="#e8e8e8" stroke="#5a5a5a" stroke-width="0.6"/><path d="M15 15.5 L20.0 13 L25 15.5 L20.0 18.0Z" fill="#f8f8f8" stroke="#5a5a5a" stroke-width="0.5"/><path d="M20.0 18.0 L25 15.5 L25 22.5 L20.0 25.0Z" fill="#cfcfcf" stroke="#5a5a5a" stroke-width="0.5"/></g><rect x="1121.5" y="140" width="1" height="31" fill="#d4d4d4"/><g transform="translate(1131,143) scale(1.0)"><path d="M1 21 L1.6 14 Q3 4 11.8 2.6 L15 0.7 L27.6 5.2 L27.6 18.5 L13 25.5Z" fill="#8e8e8e" stroke="#5a5a5a" stroke-width="0.9"/><path d="M1.6 14 Q3 4 11.8 2.6 L23.2 7 Q14.5 9 13 20.4Z" fill="url(#gGrayD)" stroke="#5a5a5a" stroke-width="0.7"/><path d="M11.8 2.6 L15 0.7 L27.6 5.2 L23.2 7Z" fill="#b4b4b4" stroke="#5a5a5a" stroke-width="0.6"/><path d="M1.6 14 L13 20.4 L13 25.5 L1 21Z" fill="#a8a8a8" stroke="#5a5a5a" stroke-width="0.7"/><path d="M2 17 L12.5 22.5" stroke="#c8c8c8" stroke-width="0.8"/></g><g transform="translate(1167.7,143) scale(1.0)"><path d="M0.5 16 L11.9 2 L15.1 0.7 L27.8 5.2 L27.8 19.1 L13.8 25.5 L0.5 21Z" fill="#8e8e8e" stroke="#5a5a5a" stroke-width="0.9"/><path d="M0.5 16 L11.9 2 L24.6 7 L13.8 20.4Z" fill="url(#gGrayD)" stroke="#5a5a5a" stroke-width="0.7"/><path d="M11.9 2 L15.1 0.7 L27.8 5.2 L24.6 7Z" fill="#b4b4b4" stroke="#5a5a5a" stroke-width="0.6"/><path d="M0.5 16 L13.8 20.4 L13.8 25.5 L0.5 21Z" fill="#a8a8a8" stroke="#5a5a5a" stroke-width="0.7"/><path d="M1 18.5 L13 22.5" stroke="#c8c8c8" stroke-width="0.8"/></g><g transform="translate(1205.7,143) scale(1.0)"><path d="M1 6 L14 1 L28 6 L28 22 L14 27 L1 22Z" fill="#a0a0a0" stroke="#5a5a5a" stroke-width="0.9"/><path d="M1 6 L14 11 L28 6 M14 11 V27" fill="none" stroke="#5a5a5a" stroke-width="0.9"/><path d="M4 9 L13 12.5 V24 L4 20.5Z M15 12.5 L25 9 V20.5 L15 24Z" fill="#7a7a7a"/><path d="M5 5 L22 8" stroke="#eee" stroke-width="0.8"/></g><g transform="translate(1243,143) scale(1.0)"><path d="M3.5 3.5 L12 0.8 L27 4 L27 20 L14 26 L0.5 22Z" fill="#a4a4a4" stroke="#5a5a5a" stroke-width="0.9"/><path d="M7 5.5 L12 4 L24 6.5 V17 L12.5 21 L5 18.5Z" fill="#8a8a8a" stroke="#5a5a5a" stroke-width="0.7"/><path d="M12 4 V16 L5 18.5 M12 16 L24 17" fill="none" stroke="#5a5a5a" stroke-width="0.7"/><path d="M12 16 L24 17 L12.5 21 L5 18.5Z" fill="#b0b0b0"/></g><rect x="1277.5" y="140" width="1" height="31" fill="#d4d4d4"/><g transform="translate(1287.6,143) scale(1.0)"><circle cx="18" cy="9.5" r="8.6" fill="url(#gSphG)" stroke="#6a6a6a" stroke-width="0.8"/><circle cx="9.5" cy="17.5" r="8.6" fill="url(#gSphG)" stroke="#6a6a6a" stroke-width="0.8"/></g><rect x="1320.65" y="136" width="1.5" height="38" fill="#bcbcbc"/><rect x="1327.5" y="140.0" width="1" height="1.2" fill="#b4b4b4"/><rect x="1327.5" y="143.0" width="1" height="1.2" fill="#b4b4b4"/><rect x="1327.5" y="146.0" width="1" height="1.2" fill="#b4b4b4"/><rect x="1327.5" y="149.0" width="1" height="1.2" fill="#b4b4b4"/><rect x="1327.5" y="152.0" width="1" height="1.2" fill="#b4b4b4"/><rect x="1327.5" y="155.0" width="1" height="1.2" fill="#b4b4b4"/><rect x="1327.5" y="158.0" width="1" height="1.2" fill="#b4b4b4"/><rect x="1327.5" y="161.0" width="1" height="1.2" fill="#b4b4b4"/><rect x="1327.5" y="164.0" width="1" height="1.2" fill="#b4b4b4"/><rect x="1327.5" y="167.0" width="1" height="1.2" fill="#b4b4b4"/><rect x="1327.5" y="170.0" width="1" height="1.2" fill="#b4b4b4"/><g transform="translate(1339,143) scale(1.0)"><path d="M0.5 1.6 L4 0.5 L18 1 L21.2 10 L21.2 15.2 L15.2 23.3 L0.5 17.2Z" fill="#e0e0e0" stroke="#8a8a8a" stroke-width="0.9"/><path d="M0.5 1.6 L15 3.5 L15.2 23.3 M15 3.5 L18 1" fill="none" stroke="#9a9a9a" stroke-width="0.7"/><ellipse cx="7.6" cy="11.6" rx="5.6" ry="7" fill="#d0d0d0" stroke="#8a8a8a" stroke-width="0.8"/><path d="M2 12 A5.6 7 0 0 0 13.2 12Z" fill="#8a8a8a"/><path d="M15.2 19.2 L26.3 22.2 L26.3 25.3 L15.2 22.7Z" fill="#cfcfcf" stroke="#7a7a7a" stroke-width="0.8"/></g><g transform="translate(1377,143) scale(1.0)"><path d="M0.5 1.6 L4 0.5 L18 1 L21.2 10 L21.2 15.2 L15.2 23.3 L0.5 17.2Z" fill="#e0e0e0" stroke="#8a8a8a" stroke-width="0.9"/><path d="M0.5 1.6 L15 3.5 L15.2 23.3 M15 3.5 L18 1" fill="none" stroke="#9a9a9a" stroke-width="0.7"/><ellipse cx="7.6" cy="11.6" rx="5.6" ry="7" fill="#d0d0d0" stroke="#8a8a8a" stroke-width="0.8"/><path d="M2 12 A5.6 7 0 0 0 13.2 12Z" fill="#8a8a8a"/><path d="M15.2 19.2 L26.3 22.2 L26.3 25.3 L15.2 22.7Z" fill="#cfcfcf" stroke="#7a7a7a" stroke-width="0.8"/><path d="M0.8 1.2 L5.4 24 L25.6 13.2Z" fill="none" stroke="#5a5a5a" stroke-width="2.2" stroke-linejoin="round"/><path d="M6 4 Q17 2 21 11" fill="none" stroke="#6a6a6a" stroke-width="2.2"/><path d="M19 9 L23.5 8 L21.5 13Z" fill="#6a6a6a"/></g><rect x="1410.8" y="140" width="1" height="31" fill="#d4d4d4"/><g transform="translate(1420.6,143) scale(1.0)"><path d="M0.5 1.6 L4 0.5 L18 1 L21.2 10 L21.2 15.2 L15.2 23.3 L0.5 17.2Z" fill="#e0e0e0" stroke="#8a8a8a" stroke-width="0.9"/><path d="M0.5 1.6 L15 3.5 L15.2 23.3 M15 3.5 L18 1" fill="none" stroke="#9a9a9a" stroke-width="0.7"/><ellipse cx="7.6" cy="11.6" rx="5.6" ry="7" fill="#d0d0d0" stroke="#8a8a8a" stroke-width="0.8"/><path d="M2 12 A5.6 7 0 0 0 13.2 12Z" fill="#8a8a8a"/><path d="M15.2 19.2 L26.3 22.2 L26.3 25.3 L15.2 22.7Z" fill="#cfcfcf" stroke="#7a7a7a" stroke-width="0.8"/><path d="M15 6 Q20 1 25 5 L26 3 L27 9 L21 9 L23 7 Q20 4 17 8Z M17 13 Q22 18 27 13" fill="#a0a0a0" stroke="#6a6a6a" stroke-width="0.8"/></g><g transform="translate(1458,143) scale(1.0)"><path d="M0.5 1.6 L4 0.5 L18 1 L21.2 10 L21.2 15.2 L15.2 23.3 L0.5 17.2Z" fill="#e0e0e0" stroke="#8a8a8a" stroke-width="0.9"/><path d="M0.5 1.6 L15 3.5 L15.2 23.3 M15 3.5 L18 1" fill="none" stroke="#9a9a9a" stroke-width="0.7"/><ellipse cx="7.6" cy="11.6" rx="5.6" ry="7" fill="#d0d0d0" stroke="#8a8a8a" stroke-width="0.8"/><path d="M2 12 A5.6 7 0 0 0 13.2 12Z" fill="#8a8a8a"/><path d="M15.2 19.2 L26.3 22.2 L26.3 25.3 L15.2 22.7Z" fill="#cfcfcf" stroke="#7a7a7a" stroke-width="0.8"/><path d="M1.5 14.5 L12.8 25 M12.8 14.5 L1.5 25" stroke="#6a6a6a" stroke-width="2.6" stroke-linecap="round"/></g><path d="M1527 153 L1530 156.5 L1527 160 M1531 153 L1534 156.5 L1531 160" fill="none" stroke="#333" stroke-width="1.2"/></svg><div style="position:absolute;left:522.6px;top:68.36px;font-size:12.8px;line-height:12.8px;color:#000;font-weight:normal;white-space:nowrap;">Part Design</div><svg style="position:absolute;left:0px;top:0px;" width="1536" height="817" viewBox="0 0 1536 817"><defs>
    <linearGradient id="filF" x1="0" y1="0" x2="0" y2="1"><stop offset="0" stop-color="#8a8a8a"/><stop offset="0.45" stop-color="#d2d2d2"/><stop offset="1" stop-color="#bdbdbd"/></linearGradient>
    <linearGradient id="filL" x1="0" y1="0" x2="1" y2="0"><stop offset="0" stop-color="#9a9a9a"/><stop offset="0.5" stop-color="#8a8a8a"/><stop offset="1" stop-color="#7e7e7e"/></linearGradient>
    <linearGradient id="filR" x1="0" y1="0" x2="1" y2="0"><stop offset="0" stop-color="#9a9a9a"/><stop offset="1" stop-color="#4a4a4a"/></linearGradient>
    <linearGradient id="csk" x1="0" y1="0" x2="1" y2="0"><stop offset="0" stop-color="#505050"/><stop offset="0.2" stop-color="#b8b8b8"/><stop offset="0.5" stop-color="#dedede"/><stop offset="0.8" stop-color="#c8c8c8"/><stop offset="1" stop-color="#505050"/></linearGradient>
    <linearGradient id="wall" x1="0" y1="0" x2="1" y2="0"><stop offset="0" stop-color="#444"/><stop offset="0.25" stop-color="#b0b0b0"/><stop offset="0.55" stop-color="#c4c4c4"/><stop offset="0.85" stop-color="#a0a0a0"/><stop offset="1" stop-color="#444"/></linearGradient>
    </defs><path d="M558.3 287.0 L700.0 428.5 L845.5 381.3 L1049.6 382.6 L1052.6 385.7 L1124.8 542.8 L1129.6 550.8 L1129.6 572.5 L961.0 627.8 L858.0 593.0 L721.3 592.5 L495.5 461.8 L468.7 399.0 L468.7 377.6 L474.5 372.1Z" fill="#7a7a7a"/><path d="M468.7 379.0 L469.8 380.5 L495.7 440.8 L495.5 461.8 L468.7 399.0Z" fill="#3a3a3a"/><path d="M480.2 372.1 L474.5 372.1 L468.7 377.6 L469.8 380.5 L495.7 440.8 L504.4 431.3Z" fill="url(#filL)"/><path d="M504.4 431.3 L726.1 560.1 L721.0 573.0 L495.7 442.8 L495.7 440.8Z" fill="url(#filF)"/><path d="M495.7 442.8 L721.0 573.0 L721.3 592.5 L495.7 462.3Z" fill="#a0a0a0"/><path d="M726.1 560.1 L859.6 560.4 L858.0 573.0 L721.0 573.0Z" fill="url(#filF)"/><path d="M721.0 573.0 L858.0 573.0 L858.0 593.0 L721.3 592.5Z" fill="#b8b8b8"/><path d="M859.6 560.4 L961.0 592.0 L961.0 606.0 L858.0 573.0Z" fill="url(#filF)"/><path d="M858.0 573.0 L961.0 606.0 L961.0 627.8 L858.0 593.0Z" fill="#ababab"/><path d="M961.0 592.0 L1116.5 541.0 L1124.8 542.8 L1129.6 550.8 L1128.8 552.0 L961.0 606.0Z" fill="url(#filF)"/><path d="M961.0 606.0 L1128.8 552.0 L1129.6 572.5 L961.0 627.8Z" fill="#afafaf"/><path d="M1044.9 384.0 L1049.6 382.6 L1052.6 385.7 L1124.8 542.8 L1116.5 541.0Z" fill="url(#filR)"/><path d="M558.3 293.5 L698.7 432.3 L845.9 384.0 L1044.9 384.0 L1116.5 541.0 L961.0 592.0 L859.6 560.4 L726.1 560.1 L504.4 431.3 L480.2 372.1Z" fill="#808080"/><ellipse cx="553" cy="401.2" rx="36" ry="20.6" fill="url(#csk)"/><clipPath id="clip553"><ellipse cx="553" cy="401.2" rx="36" ry="20.6"/></clipPath><g clip-path="url(#clip553)"><ellipse cx="553.1" cy="409.3" rx="25.5" ry="14.6" fill="url(#wall)"/><clipPath id="bclip553"><ellipse cx="553.1" cy="409.3" rx="25.5" ry="14.6"/></clipPath><g clip-path="url(#bclip553)"><ellipse cx="553.1" cy="429" rx="25.5" ry="14.6" fill="rgb(102,102,141)" stroke="#222" stroke-width="1.3"/></g><ellipse cx="553.1" cy="409.3" rx="25.5" ry="14.6" fill="none" stroke="#1a1a1a" stroke-width="1.4"/></g><ellipse cx="553" cy="401.2" rx="36" ry="20.6" fill="none" stroke="#1a1a1a" stroke-width="1.5"/><ellipse cx="729" cy="502.7" rx="39.9" ry="22.4" fill="url(#csk)"/><clipPath id="clip729"><ellipse cx="729" cy="502.7" rx="39.9" ry="22.4"/></clipPath><g clip-path="url(#clip729)"><ellipse cx="728.8" cy="510.8" rx="28.6" ry="16.2" fill="url(#wall)"/><clipPath id="bclip729"><ellipse cx="728.8" cy="510.8" rx="28.6" ry="16.2"/></clipPath><g clip-path="url(#bclip729)"><ellipse cx="728.8" cy="529.7" rx="28.6" ry="16.2" fill="rgb(123,123,157)" stroke="#222" stroke-width="1.3"/></g><ellipse cx="728.8" cy="510.8" rx="28.6" ry="16.2" fill="none" stroke="#1a1a1a" stroke-width="1.4"/></g><ellipse cx="729" cy="502.7" rx="39.9" ry="22.4" fill="none" stroke="#1a1a1a" stroke-width="1.5"/><path d="M891.1 527.9 L891.2 526.4 L891.4 524.9 L891.8 523.4 L892.4 521.9 L893.1 520.5 L894.0 519.1 L895.0 517.7 L896.1 516.4 L897.4 515.1 L898.8 513.9 L900.4 512.7 L902.1 511.6 L903.9 510.6 L905.8 509.7 L907.8 508.8 L909.9 508.0 L990.8 481.1 L992.9 480.4 L995.1 479.8 L997.4 479.2 L999.8 478.8 L1002.2 478.4 L1004.6 478.2 L1007.0 478.0 L1009.5 478.0 L1012.0 478.0 L1014.4 478.2 L1016.8 478.4 L1019.2 478.8 L1021.6 479.2 L1023.9 479.8 L1026.1 480.4 L1028.2 481.1 L1030.3 481.9 L1032.3 482.8 L1034.2 483.7 L1036.0 484.7 L1037.7 485.8 L1039.3 487.0 L1040.7 488.2 L1042.0 489.5 L1043.1 490.8 L1044.1 492.2 L1045.0 493.6 L1045.7 495.0 L1046.3 496.5 L1046.7 498.0 L1046.9 499.5 L1047.0 501.0 L1046.9 502.5 L1046.7 504.0 L1046.3 505.5 L1045.7 507.0 L1045.0 508.4 L1044.1 509.8 L1043.1 511.2 L1042.0 512.5 L1040.7 513.8 L1039.3 515.0 L1037.7 516.2 L1036.0 517.3 L1034.2 518.3 L1032.3 519.2 L1030.3 520.1 L1028.2 520.9 L947.4 547.8 L945.2 548.5 L943.0 549.1 L940.7 549.7 L938.3 550.1 L935.9 550.5 L933.5 550.7 L931.1 550.9 L928.6 550.9 L926.1 550.9 L923.7 550.7 L921.3 550.5 L918.9 550.1 L916.5 549.7 L914.2 549.1 L912.0 548.5 L909.9 547.8 L907.8 547.0 L905.8 546.1 L903.9 545.2 L902.1 544.2 L900.4 543.1 L898.8 541.9 L897.4 540.7 L896.1 539.4 L895.0 538.1 L894.0 536.7 L893.1 535.3 L892.4 533.9 L891.8 532.4 L891.4 530.9 L891.2 529.4Z" fill="url(#csk)"/><clipPath id="slotc"><path d="M891.1 527.9 L891.2 526.4 L891.4 524.9 L891.8 523.4 L892.4 521.9 L893.1 520.5 L894.0 519.1 L895.0 517.7 L896.1 516.4 L897.4 515.1 L898.8 513.9 L900.4 512.7 L902.1 511.6 L903.9 510.6 L905.8 509.7 L907.8 508.8 L909.9 508.0 L990.8 481.1 L992.9 480.4 L995.1 479.8 L997.4 479.2 L999.8 478.8 L1002.2 478.4 L1004.6 478.2 L1007.0 478.0 L1009.5 478.0 L1012.0 478.0 L1014.4 478.2 L1016.8 478.4 L1019.2 478.8 L1021.6 479.2 L1023.9 479.8 L1026.1 480.4 L1028.2 481.1 L1030.3 481.9 L1032.3 482.8 L1034.2 483.7 L1036.0 484.7 L1037.7 485.8 L1039.3 487.0 L1040.7 488.2 L1042.0 489.5 L1043.1 490.8 L1044.1 492.2 L1045.0 493.6 L1045.7 495.0 L1046.3 496.5 L1046.7 498.0 L1046.9 499.5 L1047.0 501.0 L1046.9 502.5 L1046.7 504.0 L1046.3 505.5 L1045.7 507.0 L1045.0 508.4 L1044.1 509.8 L1043.1 511.2 L1042.0 512.5 L1040.7 513.8 L1039.3 515.0 L1037.7 516.2 L1036.0 517.3 L1034.2 518.3 L1032.3 519.2 L1030.3 520.1 L1028.2 520.9 L947.4 547.8 L945.2 548.5 L943.0 549.1 L940.7 549.7 L938.3 550.1 L935.9 550.5 L933.5 550.7 L931.1 550.9 L928.6 550.9 L926.1 550.9 L923.7 550.7 L921.3 550.5 L918.9 550.1 L916.5 549.7 L914.2 549.1 L912.0 548.5 L909.9 547.8 L907.8 547.0 L905.8 546.1 L903.9 545.2 L902.1 544.2 L900.4 543.1 L898.8 541.9 L897.4 540.7 L896.1 539.4 L895.0 538.1 L894.0 536.7 L893.1 535.3 L892.4 533.9 L891.8 532.4 L891.4 530.9 L891.2 529.4Z"/></clipPath><clipPath id="sloti"><path d="M902.0 533.5 L902.1 532.4 L902.2 531.3 L902.5 530.3 L902.9 529.2 L903.5 528.2 L904.1 527.2 L904.8 526.2 L905.7 525.2 L906.6 524.3 L907.7 523.5 L908.8 522.6 L910.1 521.8 L911.4 521.1 L912.8 520.4 L914.2 519.8 L915.8 519.2 L995.8 492.7 L997.3 492.2 L999.0 491.8 L1000.7 491.4 L1002.4 491.1 L1004.1 490.8 L1005.9 490.6 L1007.7 490.5 L1009.5 490.5 L1011.3 490.5 L1013.1 490.6 L1014.9 490.8 L1016.6 491.1 L1018.3 491.4 L1020.0 491.8 L1021.7 492.2 L1023.2 492.7 L1024.8 493.3 L1026.2 493.9 L1027.6 494.6 L1028.9 495.3 L1030.2 496.1 L1031.3 497.0 L1032.4 497.8 L1033.3 498.8 L1034.2 499.7 L1034.9 500.7 L1035.5 501.7 L1036.1 502.7 L1036.5 503.8 L1036.8 504.8 L1036.9 505.9 L1037.0 507.0 L1036.9 508.1 L1036.8 509.2 L1036.5 510.2 L1036.1 511.3 L1035.5 512.3 L1034.9 513.3 L1034.2 514.3 L1033.3 515.2 L1032.4 516.2 L1031.3 517.0 L1030.2 517.9 L1028.9 518.7 L1027.6 519.4 L1026.2 520.1 L1024.8 520.7 L1023.2 521.3 L943.2 547.8 L941.7 548.3 L940.0 548.7 L938.3 549.1 L936.6 549.4 L934.9 549.7 L933.1 549.9 L931.3 550.0 L929.5 550.0 L927.7 550.0 L925.9 549.9 L924.1 549.7 L922.4 549.4 L920.7 549.1 L919.0 548.7 L917.3 548.3 L915.8 547.8 L914.2 547.2 L912.8 546.6 L911.4 545.9 L910.1 545.2 L908.8 544.4 L907.7 543.5 L906.6 542.7 L905.7 541.8 L904.8 540.8 L904.1 539.8 L903.5 538.8 L902.9 537.8 L902.5 536.7 L902.2 535.7 L902.1 534.6Z"/></clipPath><g clip-path="url(#slotc)"><path d="M902.0 533.5 L902.1 532.4 L902.2 531.3 L902.5 530.3 L902.9 529.2 L903.5 528.2 L904.1 527.2 L904.8 526.2 L905.7 525.2 L906.6 524.3 L907.7 523.5 L908.8 522.6 L910.1 521.8 L911.4 521.1 L912.8 520.4 L914.2 519.8 L915.8 519.2 L995.8 492.7 L997.3 492.2 L999.0 491.8 L1000.7 491.4 L1002.4 491.1 L1004.1 490.8 L1005.9 490.6 L1007.7 490.5 L1009.5 490.5 L1011.3 490.5 L1013.1 490.6 L1014.9 490.8 L1016.6 491.1 L1018.3 491.4 L1020.0 491.8 L1021.7 492.2 L1023.2 492.7 L1024.8 493.3 L1026.2 493.9 L1027.6 494.6 L1028.9 495.3 L1030.2 496.1 L1031.3 497.0 L1032.4 497.8 L1033.3 498.8 L1034.2 499.7 L1034.9 500.7 L1035.5 501.7 L1036.1 502.7 L1036.5 503.8 L1036.8 504.8 L1036.9 505.9 L1037.0 507.0 L1036.9 508.1 L1036.8 509.2 L1036.5 510.2 L1036.1 511.3 L1035.5 512.3 L1034.9 513.3 L1034.2 514.3 L1033.3 515.2 L1032.4 516.2 L1031.3 517.0 L1030.2 517.9 L1028.9 518.7 L1027.6 519.4 L1026.2 520.1 L1024.8 520.7 L1023.2 521.3 L943.2 547.8 L941.7 548.3 L940.0 548.7 L938.3 549.1 L936.6 549.4 L934.9 549.7 L933.1 549.9 L931.3 550.0 L929.5 550.0 L927.7 550.0 L925.9 549.9 L924.1 549.7 L922.4 549.4 L920.7 549.1 L919.0 548.7 L917.3 548.3 L915.8 547.8 L914.2 547.2 L912.8 546.6 L911.4 545.9 L910.1 545.2 L908.8 544.4 L907.7 543.5 L906.6 542.7 L905.7 541.8 L904.8 540.8 L904.1 539.8 L903.5 538.8 L902.9 537.8 L902.5 536.7 L902.2 535.7 L902.1 534.6Z" fill="url(#wall)"/><g clip-path="url(#sloti)"><path d="M902.0 553.5 L902.1 552.4 L902.2 551.3 L902.5 550.3 L902.9 549.2 L903.5 548.2 L904.1 547.2 L904.8 546.2 L905.7 545.2 L906.6 544.3 L907.7 543.5 L908.8 542.6 L910.1 541.8 L911.4 541.1 L912.8 540.4 L914.2 539.8 L915.8 539.2 L995.8 512.7 L997.3 512.2 L999.0 511.8 L1000.7 511.4 L1002.4 511.1 L1004.1 510.8 L1005.9 510.6 L1007.7 510.5 L1009.5 510.5 L1011.3 510.5 L1013.1 510.6 L1014.9 510.8 L1016.6 511.1 L1018.3 511.4 L1020.0 511.8 L1021.7 512.2 L1023.2 512.7 L1024.8 513.3 L1026.2 513.9 L1027.6 514.6 L1028.9 515.3 L1030.2 516.1 L1031.3 517.0 L1032.4 517.8 L1033.3 518.8 L1034.2 519.7 L1034.9 520.7 L1035.5 521.7 L1036.1 522.7 L1036.5 523.8 L1036.8 524.8 L1036.9 525.9 L1037.0 527.0 L1036.9 528.1 L1036.8 529.2 L1036.5 530.2 L1036.1 531.3 L1035.5 532.3 L1034.9 533.3 L1034.2 534.3 L1033.3 535.2 L1032.4 536.2 L1031.3 537.0 L1030.2 537.9 L1028.9 538.7 L1027.6 539.4 L1026.2 540.1 L1024.8 540.7 L1023.2 541.3 L943.2 567.8 L941.7 568.3 L940.0 568.7 L938.3 569.1 L936.6 569.4 L934.9 569.7 L933.1 569.9 L931.3 570.0 L929.5 570.0 L927.7 570.0 L925.9 569.9 L924.1 569.7 L922.4 569.4 L920.7 569.1 L919.0 568.7 L917.3 568.3 L915.8 567.8 L914.2 567.2 L912.8 566.6 L911.4 565.9 L910.1 565.2 L908.8 564.4 L907.7 563.5 L906.6 562.7 L905.7 561.8 L904.8 560.8 L904.1 559.8 L903.5 558.8 L902.9 557.8 L902.5 556.7 L902.2 555.7 L902.1 554.6Z" fill="rgb(124,124,158)" stroke="#222" stroke-width="1.3"/></g><path d="M902.0 533.5 L902.1 532.4 L902.2 531.3 L902.5 530.3 L902.9 529.2 L903.5 528.2 L904.1 527.2 L904.8 526.2 L905.7 525.2 L906.6 524.3 L907.7 523.5 L908.8 522.6 L910.1 521.8 L911.4 521.1 L912.8 520.4 L914.2 519.8 L915.8 519.2 L995.8 492.7 L997.3 492.2 L999.0 491.8 L1000.7 491.4 L1002.4 491.1 L1004.1 490.8 L1005.9 490.6 L1007.7 490.5 L1009.5 490.5 L1011.3 490.5 L1013.1 490.6 L1014.9 490.8 L1016.6 491.1 L1018.3 491.4 L1020.0 491.8 L1021.7 492.2 L1023.2 492.7 L1024.8 493.3 L1026.2 493.9 L1027.6 494.6 L1028.9 495.3 L1030.2 496.1 L1031.3 497.0 L1032.4 497.8 L1033.3 498.8 L1034.2 499.7 L1034.9 500.7 L1035.5 501.7 L1036.1 502.7 L1036.5 503.8 L1036.8 504.8 L1036.9 505.9 L1037.0 507.0 L1036.9 508.1 L1036.8 509.2 L1036.5 510.2 L1036.1 511.3 L1035.5 512.3 L1034.9 513.3 L1034.2 514.3 L1033.3 515.2 L1032.4 516.2 L1031.3 517.0 L1030.2 517.9 L1028.9 518.7 L1027.6 519.4 L1026.2 520.1 L1024.8 520.7 L1023.2 521.3 L943.2 547.8 L941.7 548.3 L940.0 548.7 L938.3 549.1 L936.6 549.4 L934.9 549.7 L933.1 549.9 L931.3 550.0 L929.5 550.0 L927.7 550.0 L925.9 549.9 L924.1 549.7 L922.4 549.4 L920.7 549.1 L919.0 548.7 L917.3 548.3 L915.8 547.8 L914.2 547.2 L912.8 546.6 L911.4 545.9 L910.1 545.2 L908.8 544.4 L907.7 543.5 L906.6 542.7 L905.7 541.8 L904.8 540.8 L904.1 539.8 L903.5 538.8 L902.9 537.8 L902.5 536.7 L902.2 535.7 L902.1 534.6Z" fill="none" stroke="#1a1a1a" stroke-width="1.4"/></g><path d="M891.1 527.9 L891.2 526.4 L891.4 524.9 L891.8 523.4 L892.4 521.9 L893.1 520.5 L894.0 519.1 L895.0 517.7 L896.1 516.4 L897.4 515.1 L898.8 513.9 L900.4 512.7 L902.1 511.6 L903.9 510.6 L905.8 509.7 L907.8 508.8 L909.9 508.0 L990.8 481.1 L992.9 480.4 L995.1 479.8 L997.4 479.2 L999.8 478.8 L1002.2 478.4 L1004.6 478.2 L1007.0 478.0 L1009.5 478.0 L1012.0 478.0 L1014.4 478.2 L1016.8 478.4 L1019.2 478.8 L1021.6 479.2 L1023.9 479.8 L1026.1 480.4 L1028.2 481.1 L1030.3 481.9 L1032.3 482.8 L1034.2 483.7 L1036.0 484.7 L1037.7 485.8 L1039.3 487.0 L1040.7 488.2 L1042.0 489.5 L1043.1 490.8 L1044.1 492.2 L1045.0 493.6 L1045.7 495.0 L1046.3 496.5 L1046.7 498.0 L1046.9 499.5 L1047.0 501.0 L1046.9 502.5 L1046.7 504.0 L1046.3 505.5 L1045.7 507.0 L1045.0 508.4 L1044.1 509.8 L1043.1 511.2 L1042.0 512.5 L1040.7 513.8 L1039.3 515.0 L1037.7 516.2 L1036.0 517.3 L1034.2 518.3 L1032.3 519.2 L1030.3 520.1 L1028.2 520.9 L947.4 547.8 L945.2 548.5 L943.0 549.1 L940.7 549.7 L938.3 550.1 L935.9 550.5 L933.5 550.7 L931.1 550.9 L928.6 550.9 L926.1 550.9 L923.7 550.7 L921.3 550.5 L918.9 550.1 L916.5 549.7 L914.2 549.1 L912.0 548.5 L909.9 547.8 L907.8 547.0 L905.8 546.1 L903.9 545.2 L902.1 544.2 L900.4 543.1 L898.8 541.9 L897.4 540.7 L896.1 539.4 L895.0 538.1 L894.0 536.7 L893.1 535.3 L892.4 533.9 L891.8 532.4 L891.4 530.9 L891.2 529.4Z" fill="none" stroke="#1a1a1a" stroke-width="1.5"/><path d="M912.8 505.2 Q918 510 917.5 518 L917.5 538 M984.3 481.7 Q988 487 987.8 495.2 L987.8 514.5" fill="none" stroke="#1a1a1a" stroke-width="1.3"/><path d="M480.2 372.1 L558.3 293.5 L698.7 432.3 L845.9 384.0 L1044.9 384.0" fill="none" stroke="#1a1a1a" stroke-linejoin="round" stroke-width="1.2"/><path d="M1044.9 384.0 L1116.5 541.0 L961 592 L859.6 560.4 L726.1 560.1 L504.4 431.3 L480.2 372.1" fill="none" stroke="#1a1a1a" stroke-linejoin="round" stroke-width="1.7"/><path d="M474.1 372.1 L558.3 287 L700 428.5 L845.5 381.3 L1049.6 382.6" fill="none" stroke="#1a1a1a" stroke-linejoin="round" stroke-width="1.2"/><path d="M1052.6 385.7 L1124.8 542.8 Q1129.6 547 1129.6 550.8 L1129.6 572.5 L961 627.8 L858 593 L721.3 592.5 L495.5 461.8 L468.7 399 L468.7 377.6 L474.5 372.1" fill="none" stroke="#1a1a1a" stroke-linejoin="round" stroke-width="1.8"/><path d="M469.8 380.5 L495.7 440.8 L495.5 461.8 M495.7 442.8 L721 573 L858 573 L961 606 L1128.8 552 M721 573 L721.3 592.5 M858 573 L858 593 M961 606 L961 627.8 M495.7 440.8 Q500 433 504.4 431.3 M721 573 Q722 563 726.1 560.1 M858 573 Q858 563 859.6 560.4 M961 606 L961 592 M558.3 287 L558.3 293.5 M1049.6 382.6 L1044.9 384.0" fill="none" stroke="#1a1a1a" stroke-linejoin="round" stroke-width="1.3"/></svg><svg style="position:absolute;left:2px;top:4.5px;" width="18.0" height="18.0" viewBox="0 0 18.0 18.0"><g transform="scale(1.0)"><path d="M0.5 0.5 H10.5 V4 H4.3 V7 H9 V10.5 H4.3 V17.5 H0.5Z" fill="#d81818"/><path d="M0.5 0.5 H10.5 V4 H4.3 V17.5 H0.5Z" fill="#e82020"/>
    <path d="M11.50 5.20 L12.73 5.32 L13.26 7.25 L14.06 7.68 L15.95 7.05 L16.74 8.00 L15.75 9.74 L16.01 10.60 L17.80 11.50 L17.68 12.73 L15.75 13.26 L15.32 14.06 L15.95 15.95 L15.00 16.74 L13.26 15.75 L12.40 16.01 L11.50 17.80 L10.27 17.68 L9.74 15.75 L8.94 15.32 L7.05 15.95 L6.26 15.00 L7.25 13.26 L6.99 12.40 L5.20 11.50 L5.32 10.27 L7.25 9.74 L7.68 8.94 L7.05 7.05 L8.00 6.26 L9.74 7.25 L10.60 6.99Z" fill="#4a7cc0" stroke="#2a5090" stroke-width="0.5"/><circle cx="11.5" cy="11.5" r="2.1" fill="#fff"/></g></svg><svg style="position:absolute;left:341.5px;top:756.5px;" width="18.0" height="18.0" viewBox="0 0 18.0 18.0"><g transform="scale(1.0)"><path d="M0.5 0.5 H10.5 V4 H4.3 V7 H9 V10.5 H4.3 V17.5 H0.5Z" fill="#d81818"/><path d="M0.5 0.5 H10.5 V4 H4.3 V17.5 H0.5Z" fill="#e82020"/>
    <path d="M11.50 5.20 L12.73 5.32 L13.26 7.25 L14.06 7.68 L15.95 7.05 L16.74 8.00 L15.75 9.74 L16.01 10.60 L17.80 11.50 L17.68 12.73 L15.75 13.26 L15.32 14.06 L15.95 15.95 L15.00 16.74 L13.26 15.75 L12.40 16.01 L11.50 17.80 L10.27 17.68 L9.74 15.75 L8.94 15.32 L7.05 15.95 L6.26 15.00 L7.25 13.26 L6.99 12.40 L5.20 11.50 L5.32 10.27 L7.25 9.74 L7.68 8.94 L7.05 7.05 L8.00 6.26 L9.74 7.25 L10.60 6.99Z" fill="#4a7cc0" stroke="#2a5090" stroke-width="0.5"/><circle cx="11.5" cy="11.5" r="2.1" fill="#fff"/></g></svg><svg style="position:absolute;left:480px;top:757.5px;" width="18.0" height="18.0" viewBox="0 0 18.0 18.0"><g transform="scale(1.0)"><path d="M0.5 0.5 H10.5 V4 H4.3 V7 H9 V10.5 H4.3 V17.5 H0.5Z" fill="#d81818"/><path d="M0.5 0.5 H10.5 V4 H4.3 V17.5 H0.5Z" fill="#e82020"/>
    <path d="M11.50 5.20 L12.73 5.32 L13.26 7.25 L14.06 7.68 L15.95 7.05 L16.74 8.00 L15.75 9.74 L16.01 10.60 L17.80 11.50 L17.68 12.73 L15.75 13.26 L15.32 14.06 L15.95 15.95 L15.00 16.74 L13.26 15.75 L12.40 16.01 L11.50 17.80 L10.27 17.68 L9.74 15.75 L8.94 15.32 L7.05 15.95 L6.26 15.00 L7.25 13.26 L6.99 12.40 L5.20 11.50 L5.32 10.27 L7.25 9.74 L7.68 8.94 L7.05 7.05 L8.00 6.26 L9.74 7.25 L10.60 6.99Z" fill="#4a7cc0" stroke="#2a5090" stroke-width="0.5"/><circle cx="11.5" cy="11.5" r="2.1" fill="#fff"/></g></svg><svg style="position:absolute;left:432px;top:758.5px;" width="16" height="16" viewBox="0 0 16 16"><rect x="0.5" y="0.5" width="15" height="15" rx="2" fill="#c4c4c4" stroke="#b0b0b0"/><path d="M5 5 L11 11 M11 5 L5 11" stroke="#fff" stroke-width="1.8"/></svg><svg style="position:absolute;left:593px;top:759.5px;" width="17" height="17" viewBox="0 0 17 17"><rect x="0.5" y="0.5" width="16" height="16" rx="2" fill="#e07850" stroke="#d84a3a"/><path d="M5.5 5.5 L11.5 11.5 M11.5 5.5 L5.5 11.5" stroke="#fff" stroke-width="1.9"/></svg><svg style="position:absolute;left:78px;top:206px;" width="20" height="20" viewBox="0 0 20 20"><path d="M2 3.5 L4.5 1 L17 13.5 L18.5 18.5 L13.5 17Z" fill="#3a64a8" stroke="#1e3c70" stroke-width="0.8"/><path d="M14 17 L17 14 L18.5 18.5Z" fill="#fff" stroke="#333" stroke-width="0.5"/><path d="M4 3 L15.5 14.5" stroke="#7aa0dc" stroke-width="1"/></svg><svg style="position:absolute;left:18px;top:306px;" width="24" height="22" viewBox="0 0 24 22"><path d="M3.5 12.4 L12.3 14.6 L12.3 19.5 L3.5 17.3Z" fill="#3a78c8" stroke="#10204a" stroke-width="0.6"/><path d="M12.3 14.6 Q13 9 17.4 7.3 L20.8 6.4 V15.5 L12.3 19.5Z" fill="#2a5ea8" stroke="#10204a" stroke-width="0.6"/><path d="M8.9 4.3 L12 3.2 L20.8 6.4 L17.4 7.3Z" fill="#5a90d8" stroke="#10204a" stroke-width="0.6"/><path d="M3.7 12.4 Q4 5 8.9 4.3 L17.4 7.3 Q13 9 12.3 14.6Z" fill="#e02020" stroke="#401010" stroke-width="0.6"/></svg><svg style="position:absolute;left:283px;top:308px;" width="20" height="20" viewBox="0 0 20 20"><circle cx="10" cy="10" r="8.5" fill="#fff" stroke="#c8d2ee" stroke-width="1"/><path d="M6.5 10 L10 6.5 L13.5 10 M6.5 13.5 L10 10 L13.5 13.5" fill="none" stroke="#2050a8" stroke-width="1.6"/></svg><svg style="position:absolute;left:252px;top:618px;" width="14" height="14" viewBox="0 0 14 14"><circle cx="7" cy="7" r="6" fill="#a8c0dc" stroke="#7890b0" stroke-width="0.8"/><text x="7" y="9.5" font-size="6" text-anchor="middle" fill="#fff" font-family="Liberation Sans">ƒ</text></svg><svg style="position:absolute;left:1299px;top:789px;" width="20" height="22" viewBox="0 0 20 22"><path d="M4 15 Q6 20 13 18 M16 7 Q14 2 7 4" fill="none" stroke="#555" stroke-width="2.2"/><circle cx="5" cy="16" r="3.2" fill="#333"/><circle cx="15" cy="6" r="3.2" fill="#333"/></svg><svg style="position:absolute;left:0px;top:0px;pointer-events:none" width="1536" height="817" viewBox="0 0 1536 817"><path d="M1470.0 191.5 L1479.5 181.5 L1488.8 191.5Z" fill="#9494b8"/><path d="M1470.0 278.2 L1479.5 288.0 L1488.8 278.2Z" fill="#9494b8"/><path d="M1436.6 225.7 L1427.0 234.4 L1436.6 244.0Z" fill="#9494b8"/><path d="M1522.5 225.7 L1532.0 234.4 L1522.5 244.0Z" fill="#9494b8"/><path d="M1464.8 188.8 L1462.7 189.4 L1460.7 190.1 L1458.7 190.8 L1456.8 191.7 L1454.9 192.6 L1453.0 193.6 L1451.1 194.6 L1449.3 195.8 L1447.6 197.0 L1445.9 198.2 L1443.4 195.1 L1439.5 209.5 L1452.6 206.9 L1449.9 203.4 L1451.4 202.2 L1452.9 201.2 L1454.5 200.2 L1456.1 199.3 L1457.8 198.4 L1459.4 197.6 L1461.2 196.9 L1462.9 196.2 L1464.7 195.6 L1466.5 195.1Z" fill="#9494b8"/><path d="M1492.2 188.8 L1494.3 189.4 L1496.3 190.1 L1498.3 190.8 L1500.2 191.7 L1502.1 192.6 L1504.0 193.6 L1505.9 194.6 L1507.7 195.8 L1509.4 197.0 L1511.1 198.2 L1513.6 195.1 L1517.5 209.5 L1504.4 206.9 L1507.1 203.4 L1505.6 202.2 L1504.1 201.2 L1502.5 200.2 L1500.9 199.3 L1499.2 198.4 L1497.6 197.6 L1495.8 196.9 L1494.1 196.2 L1492.3 195.6 L1490.5 195.1Z" fill="#9494b8"/><path d="M1449.3 217.7 L1457.3 211.4 L1478.7 205.8 L1501.8 212.2 L1509.8 220.9 L1508.2 241.6 L1498.6 259.1 L1478.7 267.0 L1460.4 259.1 L1450.9 240.0Z" fill="#c8c8dc" stroke="#9a9ab8" stroke-width="1"/><path d="M1449.3 222.5 L1473.2 233.6 L1474.8 265.4 L1482.7 265.4 L1484.3 233.6 L1509.8 222.5 L1509.8 217.7 L1478.7 227.3 L1449.3 217.7Z" fill="#a0a0c0"/><circle cx="1478.7" cy="233.6" r="5" fill="#b8b8d0" stroke="#9a9ab8" stroke-width="0.8"/><text x="1473.2" y="217.7" font-size="7" font-weight="bold" fill="#000" font-family="Liberation Sans" transform="rotate(10 1473.2 217.7)">TOP</text><text x="1455.7" y="240.0" font-size="7" font-weight="bold" fill="#000" font-family="Liberation Sans" transform="rotate(30 1455.7 240.0)">FRONT</text><text x="1489.1" y="251.1" font-size="7" font-weight="bold" fill="#000" font-family="Liberation Sans" transform="rotate(-30 1489.1 251.1)">RIGHT</text><path d="M1443.7 224.9 L1450.1 251.1" stroke="#2020ff" stroke-width="1.2"/><path d="M1450.1 251.1 L1470.0 268.6" stroke="#e01010" stroke-width="1.2"/><path d="M1450.1 251.1 L1472.4 238.4" stroke="#30e030" stroke-width="1"/><text x="1442.9" y="212.9" font-size="6" fill="#2020ff" font-family="Liberation Sans">Z</text><text x="1480.3" y="278.2" font-size="6" fill="#c01010" font-family="Liberation Sans">X</text><path d="M1497.8 271.8 L1505.0 267.8 L1512.9 271.0 L1512.9 279.8 L1505.8 283.7 L1497.8 280.5Z" fill="#8888aa"/><path d="M1517.7 273.4 L1526.5 273.4 L1522.2 277.4Z" fill="#55557a"/></svg><svg style="position:absolute;left:1496px;top:696px;" width="40" height="40" viewBox="0 0 40 40"><path d="M12.5 28 V9" stroke="#22229a" stroke-width="1.7"/><path d="M10.5 16.5 L12.5 11 L14.5 16.5Z" fill="#22229a"/>
    <path d="M12.5 28 L25 22" stroke="#1a8a1a" stroke-width="1.6"/><path d="M21 21.5 L27 21 L23.5 25Z" fill="#1a8a1a"/>
    <path d="M12.5 28 L28 35" stroke="#9a1a1a" stroke-width="1.6"/><path d="M23.5 32 L30 36 L23 35.5Z" fill="#9a1a1a"/>
    <text x="15" y="10.5" font-size="7.5" fill="#222" font-family="Liberation Sans">Z</text><text x="26.5" y="23" font-size="6.5" fill="#333" font-family="Liberation Sans">Y</text><text x="31" y="39" font-size="6.5" fill="#222" font-family="Liberation Sans">X</text></svg>
</body></html>
